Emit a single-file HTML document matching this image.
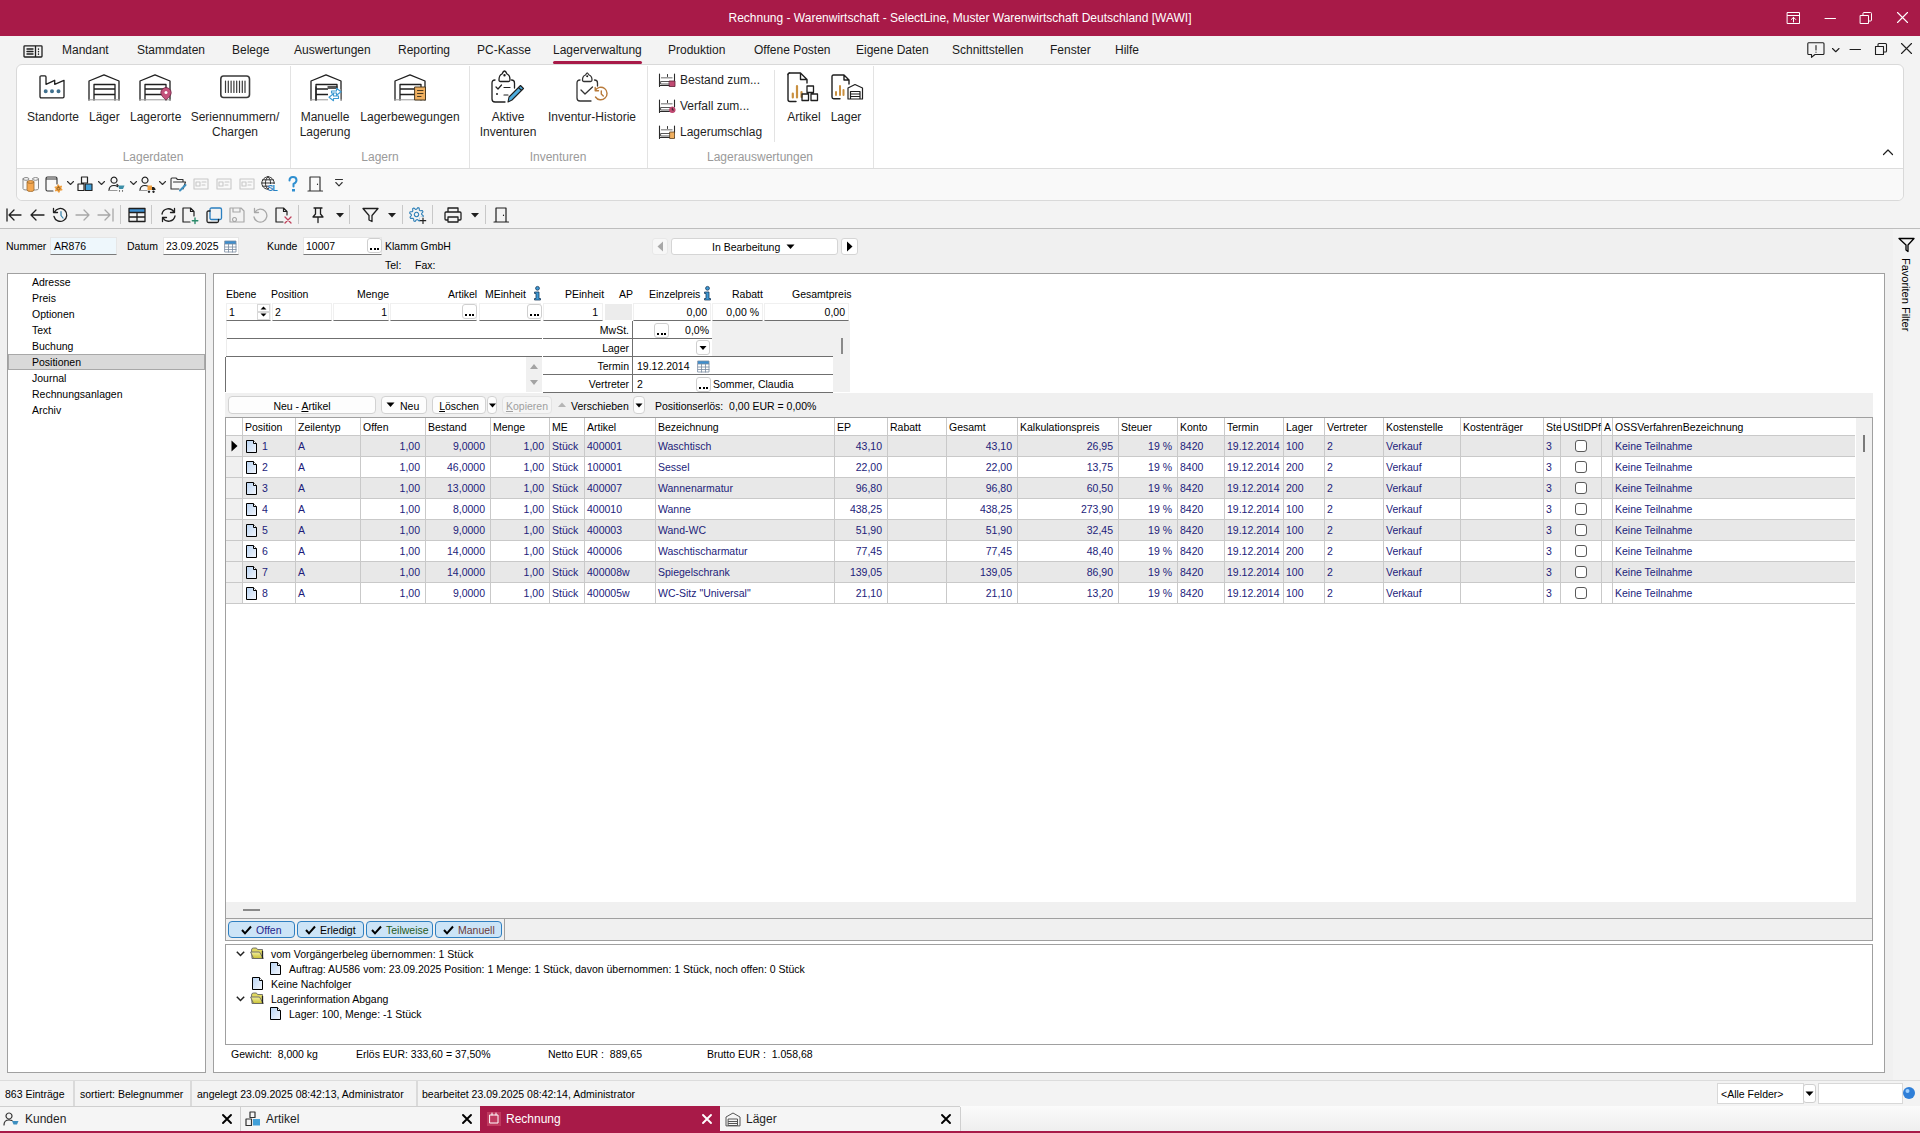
<!DOCTYPE html><html><head><meta charset="utf-8"><style>
*{margin:0;padding:0;box-sizing:border-box}
html,body{width:1920px;height:1133px;overflow:hidden;background:#f0f0f0;font-family:"Liberation Sans",sans-serif;font-size:10.5px;color:#000}
.a{position:absolute}
.t{position:absolute;white-space:nowrap;line-height:1}
svg{position:absolute;overflow:visible}
</style></head><body><div class="a" style="left:0px;top:0px;width:1920px;height:36px;background:#a81a48"></div>
<div class="t" style="left:660px;width:600px;text-align:center;top:11.84px;font-size:12px;color:#fff">Rechnung - Warenwirtschaft - SelectLine, Muster Warenwirtschaft Deutschland [WAWI]</div>
<div class="a" style="left:0px;top:36px;width:1920px;height:192px;background:#f3f3f3"></div>
<div class="t" style="left:62px;top:43.84px;font-size:12px;color:#1a1a1a">Mandant</div>
<div class="t" style="left:137px;top:43.84px;font-size:12px;color:#1a1a1a">Stammdaten</div>
<div class="t" style="left:232px;top:43.84px;font-size:12px;color:#1a1a1a">Belege</div>
<div class="t" style="left:294px;top:43.84px;font-size:12px;color:#1a1a1a">Auswertungen</div>
<div class="t" style="left:398px;top:43.84px;font-size:12px;color:#1a1a1a">Reporting</div>
<div class="t" style="left:477px;top:43.84px;font-size:12px;color:#1a1a1a">PC-Kasse</div>
<div class="t" style="left:553px;top:43.84px;font-size:12px;color:#1a1a1a">Lagerverwaltung</div>
<div class="t" style="left:668px;top:43.84px;font-size:12px;color:#1a1a1a">Produktion</div>
<div class="t" style="left:754px;top:43.84px;font-size:12px;color:#1a1a1a">Offene Posten</div>
<div class="t" style="left:856px;top:43.84px;font-size:12px;color:#1a1a1a">Eigene Daten</div>
<div class="t" style="left:952px;top:43.84px;font-size:12px;color:#1a1a1a">Schnittstellen</div>
<div class="t" style="left:1050px;top:43.84px;font-size:12px;color:#1a1a1a">Fenster</div>
<div class="t" style="left:1115px;top:43.84px;font-size:12px;color:#1a1a1a">Hilfe</div>
<div class="a" style="left:553px;top:61px;width:89px;height:3px;background:#a81a48;border-radius:2px"></div>
<div class="a" style="left:16px;top:64px;width:1888px;height:137px;background:#fff;border:1px solid #d9d9d9;border-radius:6px;"></div>
<div class="a" style="left:17px;top:168px;width:1886px;height:32px;background:#f9f9f9;border-top:1px solid #dcdcdc;border-radius:0 0 6px 6px"></div>
<div class="t" style="left:27px;top:110.84px;font-size:12px;color:#1f1f1f">Standorte</div>
<div class="t" style="left:89px;top:110.84px;font-size:12px;color:#1f1f1f">Läger</div>
<div class="t" style="left:130px;top:110.84px;font-size:12px;color:#1f1f1f">Lagerorte</div>
<div class="t" style="left:-65px;width:600px;text-align:center;top:110.84px;font-size:12px;color:#1f1f1f">Seriennummern/</div>
<div class="t" style="left:-65px;width:600px;text-align:center;top:125.84px;font-size:12px;color:#1f1f1f">Chargen</div>
<div class="t" style="left:25px;width:600px;text-align:center;top:110.84px;font-size:12px;color:#1f1f1f">Manuelle</div>
<div class="t" style="left:25px;width:600px;text-align:center;top:125.84px;font-size:12px;color:#1f1f1f">Lagerung</div>
<div class="t" style="left:110px;width:600px;text-align:center;top:110.84px;font-size:12px;color:#1f1f1f">Lagerbewegungen</div>
<div class="t" style="left:208px;width:600px;text-align:center;top:110.84px;font-size:12px;color:#1f1f1f">Aktive</div>
<div class="t" style="left:208px;width:600px;text-align:center;top:125.84px;font-size:12px;color:#1f1f1f">Inventuren</div>
<div class="t" style="left:292px;width:600px;text-align:center;top:110.84px;font-size:12px;color:#1f1f1f">Inventur-Historie</div>
<div class="t" style="left:680px;top:73.84px;font-size:12px;color:#1f1f1f">Bestand zum...</div>
<div class="t" style="left:680px;top:99.84px;font-size:12px;color:#1f1f1f">Verfall zum...</div>
<div class="t" style="left:680px;top:125.84px;font-size:12px;color:#1f1f1f">Lagerumschlag</div>
<div class="t" style="left:504px;width:600px;text-align:center;top:110.84px;font-size:12px;color:#1f1f1f">Artikel</div>
<div class="t" style="left:546px;width:600px;text-align:center;top:110.84px;font-size:12px;color:#1f1f1f">Lager</div>
<div class="t" style="left:-147px;width:600px;text-align:center;top:150.84px;font-size:12px;color:#9a9a9a">Lagerdaten</div>
<div class="t" style="left:80px;width:600px;text-align:center;top:150.84px;font-size:12px;color:#9a9a9a">Lagern</div>
<div class="t" style="left:258px;width:600px;text-align:center;top:150.84px;font-size:12px;color:#9a9a9a">Inventuren</div>
<div class="t" style="left:460px;width:600px;text-align:center;top:150.84px;font-size:12px;color:#9a9a9a">Lagerauswertungen</div>
<div class="a" style="left:290px;top:66px;width:1px;height:102px;background:#e3e3e3"></div>
<div class="a" style="left:469px;top:66px;width:1px;height:102px;background:#e3e3e3"></div>
<div class="a" style="left:647px;top:66px;width:1px;height:102px;background:#e3e3e3"></div>
<div class="a" style="left:873px;top:66px;width:1px;height:102px;background:#e3e3e3"></div>
<div class="a" style="left:774px;top:70px;width:1px;height:72px;background:#e3e3e3"></div>
<div class="a" style="left:0px;top:228px;width:1920px;height:1px;background:#bdbdbd"></div>
<svg width="0" height="0" style="position:absolute"><defs><linearGradient id="dg" x1="0" y1="0" x2="1" y2="1"><stop offset="0" stop-color="#b8d4f4"/><stop offset="1" stop-color="#f4f6fb"/></linearGradient><linearGradient id="fg" x1="0" y1="0" x2="0" y2="1"><stop offset="0" stop-color="#f4f0a0"/><stop offset="1" stop-color="#c8c030"/></linearGradient></defs></svg>
<div class="t" style="left:6px;top:241.11px;font-size:10.5px;">Nummer</div>
<div class="a" style="left:50px;top:237px;width:67px;height:18px;background:#eef7fc;border:1px solid #e6e6e6;border-bottom:1px solid #7a7a7a"></div>
<div class="t" style="left:54px;top:241.11px;font-size:10.5px;">AR876</div>
<div class="t" style="left:127px;top:241.11px;font-size:10.5px;">Datum</div>
<div class="a" style="left:163px;top:237px;width:76px;height:18px;background:#fff;border:1px solid #e6e6e6;border-bottom:1px solid #7a7a7a"></div>
<div class="t" style="left:166px;top:241.11px;font-size:10.5px;">23.09.2025</div>
<div class="t" style="left:267px;top:241.11px;font-size:10.5px;">Kunde</div>
<div class="a" style="left:303px;top:237px;width:79px;height:18px;background:#fff;border:1px solid #e6e6e6;border-bottom:1px solid #7a7a7a"></div>
<div class="t" style="left:306px;top:241.11px;font-size:10.5px;">10007</div>
<div class="a" style="left:367px;top:238px;width:15px;height:15px;background:#fff;border:1px solid #cfcfcf;border-radius:3px"></div>
<div class="a" style="left:370.0px;top:248px;width:2px;height:2px;background:#000"></div>
<div class="a" style="left:373.5px;top:248px;width:2px;height:2px;background:#000"></div>
<div class="a" style="left:377.0px;top:248px;width:2px;height:2px;background:#000"></div>
<div class="t" style="left:385px;top:241.11px;font-size:10.5px;">Klamm GmbH</div>
<div class="t" style="left:385px;top:260.11px;font-size:10.5px;">Tel:</div>
<div class="t" style="left:415px;top:260.11px;font-size:10.5px;">Fax:</div>
<div class="a" style="left:652px;top:238px;width:16px;height:17px;background:#f7f7f7;border:1px solid #e8e8e8;border-radius:3px"></div>
<div class="a" style="left:671px;top:238px;width:167px;height:17px;background:#fff;border:1px solid #d5d5d5;border-radius:3px"></div>
<div class="t" style="left:712px;top:242.11px;font-size:10.5px;">In Bearbeitung</div>
<div class="a" style="left:841px;top:238px;width:17px;height:17px;background:#fff;border:1px solid #d5d5d5;border-radius:3px"></div>
<div class="a" style="left:7px;top:273px;width:199px;height:800px;background:#fff;border:1px solid #a0a0a0"></div>
<div class="a" style="left:8px;top:354px;width:197px;height:16px;background:#d9d9d9;border:1px solid #a8a8a8"></div>
<div class="t" style="left:32px;top:277.11px;font-size:10.5px;">Adresse</div>
<div class="t" style="left:32px;top:293.11px;font-size:10.5px;">Preis</div>
<div class="t" style="left:32px;top:309.11px;font-size:10.5px;">Optionen</div>
<div class="t" style="left:32px;top:325.11px;font-size:10.5px;">Text</div>
<div class="t" style="left:32px;top:341.11px;font-size:10.5px;">Buchung</div>
<div class="t" style="left:32px;top:357.11px;font-size:10.5px;">Positionen</div>
<div class="t" style="left:32px;top:373.11px;font-size:10.5px;">Journal</div>
<div class="t" style="left:32px;top:389.11px;font-size:10.5px;">Rechnungsanlagen</div>
<div class="t" style="left:32px;top:405.11px;font-size:10.5px;">Archiv</div>
<div class="a" style="left:213px;top:273px;width:1672px;height:800px;background:#fff;border:1px solid #a0a0a0"></div>
<div class="a" style="left:1893px;top:229px;width:27px;height:851px;background:#f3f3f3"></div>
<div class="t" style="left:226px;top:289.11px;font-size:10.5px;">Ebene</div>
<div class="t" style="left:271px;top:289.11px;font-size:10.5px;">Position</div>
<div class="t" style="left:357px;top:289.11px;font-size:10.5px;">Menge</div>
<div class="t" style="left:448px;top:289.11px;font-size:10.5px;">Artikel</div>
<div class="t" style="left:485px;top:289.11px;font-size:10.5px;">MEinheit</div>
<div class="t" style="left:565px;top:289.11px;font-size:10.5px;">PEinheit</div>
<div class="t" style="left:619px;top:289.11px;font-size:10.5px;">AP</div>
<div class="t" style="left:649px;top:289.11px;font-size:10.5px;">Einzelpreis</div>
<div class="t" style="left:732px;top:289.11px;font-size:10.5px;">Rabatt</div>
<div class="t" style="left:792px;top:289.11px;font-size:10.5px;">Gesamtpreis</div>
<svg style="left:533px;top:286px;" width="9" height="15" viewBox="0 0 9 15"><circle cx="4.5" cy="2.3" r="1.9" fill="#3d9ad6" stroke="#1a3a5a" stroke-width="0.8"/><path d="M1.5 6 H6 V12.5 H7.5 V14 H1.5 V12.5 H3 V7.5 H1.5Z" fill="#3d9ad6" stroke="#1a3a5a" stroke-width="0.8"/></svg>
<svg style="left:703px;top:286px;" width="9" height="15" viewBox="0 0 9 15"><circle cx="4.5" cy="2.3" r="1.9" fill="#3d9ad6" stroke="#1a3a5a" stroke-width="0.8"/><path d="M1.5 6 H6 V12.5 H7.5 V14 H1.5 V12.5 H3 V7.5 H1.5Z" fill="#3d9ad6" stroke="#1a3a5a" stroke-width="0.8"/></svg>
<div class="a" style="left:226px;top:303px;width:45px;height:18px;background:#fff;border:1px solid #f0f0f0;border-bottom:1px solid #6f6f6f"></div>
<div class="a" style="left:272px;top:303px;width:60px;height:18px;background:#fff;border:1px solid #f0f0f0;border-bottom:1px solid #6f6f6f"></div>
<div class="a" style="left:333px;top:303px;width:56px;height:18px;background:#fff;border:1px solid #f0f0f0;border-bottom:1px solid #6f6f6f"></div>
<div class="a" style="left:390px;top:303px;width:87px;height:18px;background:#fff;border:1px solid #f0f0f0;border-bottom:1px solid #6f6f6f"></div>
<div class="a" style="left:479px;top:303px;width:62px;height:18px;background:#fff;border:1px solid #f0f0f0;border-bottom:1px solid #6f6f6f"></div>
<div class="a" style="left:543px;top:303px;width:60px;height:18px;background:#fff;border:1px solid #f0f0f0;border-bottom:1px solid #6f6f6f"></div>
<div class="a" style="left:633px;top:303px;width:78px;height:18px;background:#fff;border:1px solid #f0f0f0;border-bottom:1px solid #6f6f6f"></div>
<div class="a" style="left:712px;top:303px;width:51px;height:18px;background:#fff;border:1px solid #f0f0f0;border-bottom:1px solid #6f6f6f"></div>
<div class="a" style="left:764px;top:303px;width:85px;height:18px;background:#fff;border:1px solid #f0f0f0;border-bottom:1px solid #6f6f6f"></div>
<div class="a" style="left:605px;top:304px;width:27px;height:16px;background:#ececec"></div>
<div class="t" style="left:229px;top:307.11px;font-size:10.5px;">1</div>
<div class="t" style="left:275px;top:307.11px;font-size:10.5px;">2</div>
<div class="t" style="left:-13px;width:400px;text-align:right;top:307.11px;font-size:10.5px;">1</div>
<div class="t" style="left:198px;width:400px;text-align:right;top:307.11px;font-size:10.5px;">1</div>
<div class="t" style="left:307px;width:400px;text-align:right;top:307.11px;font-size:10.5px;">0,00</div>
<div class="t" style="left:359px;width:400px;text-align:right;top:307.11px;font-size:10.5px;">0,00 %</div>
<div class="t" style="left:445px;width:400px;text-align:right;top:307.11px;font-size:10.5px;">0,00</div>
<div class="a" style="left:257px;top:304px;width:13px;height:8px;background:#fff;border:1px solid #d8d8d8"></div>
<div class="a" style="left:257px;top:312px;width:13px;height:8px;background:#fff;border:1px solid #d8d8d8"></div>
<svg style="left:257px;top:304px;" width="13" height="16" viewBox="0 0 13 16"><path d="M3.5 5.5 L6.5 2.5 L9.5 5.5Z M3.5 9.5 L6.5 12.5 L9.5 9.5Z" fill="#000"/></svg>
<div class="a" style="left:462px;top:304px;width:15px;height:15px;background:#fff;border:1px solid #cfcfcf;border-radius:3px"></div>
<div class="a" style="left:465.0px;top:314px;width:2px;height:2px;background:#000"></div>
<div class="a" style="left:468.5px;top:314px;width:2px;height:2px;background:#000"></div>
<div class="a" style="left:472.0px;top:314px;width:2px;height:2px;background:#000"></div>
<div class="a" style="left:527px;top:304px;width:15px;height:15px;background:#fff;border:1px solid #cfcfcf;border-radius:3px"></div>
<div class="a" style="left:530.0px;top:314px;width:2px;height:2px;background:#000"></div>
<div class="a" style="left:533.5px;top:314px;width:2px;height:2px;background:#000"></div>
<div class="a" style="left:537.0px;top:314px;width:2px;height:2px;background:#000"></div>
<div class="a" style="left:226px;top:338px;width:316px;height:1px;background:#6f6f6f"></div>
<div class="a" style="left:226px;top:356px;width:316px;height:1px;background:#6f6f6f"></div>
<div class="a" style="left:526px;top:357px;width:16px;height:35px;background:#f0f0f0"></div>
<div class="a" style="left:225px;top:357px;width:1px;height:35px;background:#6f6f6f"></div>
<div class="a" style="left:226px;top:321px;width:1px;height:35px;background:#ececec"></div>
<svg style="left:527px;top:360px;" width="14" height="28" viewBox="0 0 14 28"><path d="M3 9 L7 4 L11 9Z M3 20 L7 25 L11 20Z" fill="#a3a3a3"/></svg>
<div class="a" style="left:543px;top:338px;width:290px;height:1px;background:#6f6f6f"></div>
<div class="a" style="left:543px;top:356px;width:290px;height:1px;background:#6f6f6f"></div>
<div class="a" style="left:543px;top:374px;width:290px;height:1px;background:#6f6f6f"></div>
<div class="a" style="left:543px;top:392px;width:290px;height:1px;background:#6f6f6f"></div>
<div class="a" style="left:632px;top:321px;width:1px;height:71px;background:#6f6f6f"></div>
<div class="a" style="left:712px;top:321px;width:121px;height:35px;background:#f0f0f0"></div>
<div class="a" style="left:833px;top:321px;width:17px;height:71px;background:#f0f0f0"></div>
<div class="a" style="left:841px;top:338px;width:2px;height:16px;background:#8a8a8a"></div>
<div class="t" style="left:229px;width:400px;text-align:right;top:325.11px;font-size:10.5px;">MwSt.</div>
<div class="t" style="left:229px;width:400px;text-align:right;top:343.11px;font-size:10.5px;">Lager</div>
<div class="t" style="left:229px;width:400px;text-align:right;top:361.11px;font-size:10.5px;">Termin</div>
<div class="t" style="left:229px;width:400px;text-align:right;top:379.11px;font-size:10.5px;">Vertreter</div>
<div class="a" style="left:654px;top:323px;width:15px;height:15px;background:#fff;border:1px solid #cfcfcf;border-radius:3px"></div>
<div class="a" style="left:657.0px;top:333px;width:2px;height:2px;background:#000"></div>
<div class="a" style="left:660.5px;top:333px;width:2px;height:2px;background:#000"></div>
<div class="a" style="left:664.0px;top:333px;width:2px;height:2px;background:#000"></div>
<div class="t" style="left:309px;width:400px;text-align:right;top:325.11px;font-size:10.5px;">0,0%</div>
<div class="a" style="left:696px;top:340px;width:14px;height:15px;background:#fff;border:1px solid #cfcfcf;border-radius:3px"></div>
<svg style="left:697px;top:341px;" width="12" height="13" viewBox="0 0 12 13"><path d="M2.5 5 L9.5 5 L6 9Z" fill="#000"/></svg>
<div class="t" style="left:637px;top:361.11px;font-size:10.5px;">19.12.2014</div>
<div class="t" style="left:637px;top:379.11px;font-size:10.5px;">2</div>
<div class="a" style="left:696px;top:377px;width:15px;height:15px;background:#fff;border:1px solid #cfcfcf;border-radius:3px"></div>
<div class="a" style="left:699.0px;top:387px;width:2px;height:2px;background:#000"></div>
<div class="a" style="left:702.5px;top:387px;width:2px;height:2px;background:#000"></div>
<div class="a" style="left:706.0px;top:387px;width:2px;height:2px;background:#000"></div>
<div class="t" style="left:713px;top:379.11px;font-size:10.5px;">Sommer, Claudia</div>
<div class="a" style="left:225px;top:393px;width:1648px;height:24px;background:#f0f0f0"></div>
<div class="a" style="left:228px;top:396px;width:148px;height:18px;background:#fdfdfd;border:1px solid #d2d2d2;border-radius:4px"></div>
<div class="t" style="left:2px;width:600px;text-align:center;top:400.61px;font-size:10.5px;">Neu - <u>A</u>rtikel</div>
<div class="a" style="left:381px;top:396px;width:46px;height:18px;background:#fdfdfd;border:1px solid #d2d2d2;border-radius:4px"></div>
<svg style="left:386px;top:401px;" width="10" height="8" viewBox="0 0 10 8"><path d="M0.5 1.5 L8.5 1.5 L4.5 6Z" fill="#000"/></svg>
<div class="t" style="left:400px;top:400.61px;font-size:10.5px;">Neu</div>
<div class="a" style="left:432px;top:396px;width:54px;height:18px;background:#fdfdfd;border:1px solid #d2d2d2;border-radius:4px"></div>
<div class="t" style="left:159px;width:600px;text-align:center;top:400.61px;font-size:10.5px;"><u>L</u>öschen</div>
<div class="a" style="left:487px;top:396px;width:10px;height:18px;background:#fdfdfd;border:1px solid #d2d2d2;border-radius:4px"></div>
<svg style="left:488px;top:403px;" width="9" height="6" viewBox="0 0 9 6"><path d="M1 0.5 L8 0.5 L4.5 4.5Z" fill="#000"/></svg>
<div class="a" style="left:502px;top:396px;width:50px;height:18px;background:#f5f5f5;border:1px solid #e3e3e3;border-radius:4px"></div>
<div class="t" style="left:227px;width:600px;text-align:center;top:400.61px;font-size:10.5px;color:#a0a0a0"><u>K</u>opieren</div>
<svg style="left:557px;top:401px;" width="10" height="8" viewBox="0 0 10 8"><path d="M1 6 L5 1.5 L9 6Z" fill="#b5b5b5"/></svg>
<div class="t" style="left:571px;top:400.61px;font-size:10.5px;">Verschieben</div>
<div class="a" style="left:633px;top:396px;width:12px;height:18px;background:#fdfdfd;border:1px solid #d2d2d2;border-radius:4px"></div>
<svg style="left:634px;top:403px;" width="10" height="6" viewBox="0 0 10 6"><path d="M1.5 0.5 L8.5 0.5 L5 4.5Z" fill="#000"/></svg>
<div class="t" style="left:655px;top:400.61px;font-size:10.5px;">Positionserlös:&nbsp; 0,00 EUR = 0,00%</div>
<div class="a" style="left:225px;top:417px;width:1648px;height:502px;background:#fff;border:1px solid #a0a0a0"></div>
<div class="a" style="left:242px;top:436px;width:1613px;height:20px;background:#e8e8e8"></div>
<div class="a" style="left:226px;top:436px;width:16px;height:20px;background:#f0f0f0"></div>
<div class="a" style="left:226px;top:456px;width:1629px;height:1px;background:#c9c9c9"></div>
<div class="a" style="left:226px;top:457px;width:16px;height:20px;background:#f0f0f0"></div>
<div class="a" style="left:226px;top:477px;width:1629px;height:1px;background:#c9c9c9"></div>
<div class="a" style="left:242px;top:478px;width:1613px;height:20px;background:#e8e8e8"></div>
<div class="a" style="left:226px;top:478px;width:16px;height:20px;background:#f0f0f0"></div>
<div class="a" style="left:226px;top:498px;width:1629px;height:1px;background:#c9c9c9"></div>
<div class="a" style="left:226px;top:499px;width:16px;height:20px;background:#f0f0f0"></div>
<div class="a" style="left:226px;top:519px;width:1629px;height:1px;background:#c9c9c9"></div>
<div class="a" style="left:242px;top:520px;width:1613px;height:20px;background:#e8e8e8"></div>
<div class="a" style="left:226px;top:520px;width:16px;height:20px;background:#f0f0f0"></div>
<div class="a" style="left:226px;top:540px;width:1629px;height:1px;background:#c9c9c9"></div>
<div class="a" style="left:226px;top:541px;width:16px;height:20px;background:#f0f0f0"></div>
<div class="a" style="left:226px;top:561px;width:1629px;height:1px;background:#c9c9c9"></div>
<div class="a" style="left:242px;top:562px;width:1613px;height:20px;background:#e8e8e8"></div>
<div class="a" style="left:226px;top:562px;width:16px;height:20px;background:#f0f0f0"></div>
<div class="a" style="left:226px;top:582px;width:1629px;height:1px;background:#c9c9c9"></div>
<div class="a" style="left:226px;top:583px;width:16px;height:20px;background:#f0f0f0"></div>
<div class="a" style="left:226px;top:603px;width:1629px;height:1px;background:#c9c9c9"></div>
<div class="a" style="left:226px;top:435px;width:1629px;height:1px;background:#c9c9c9"></div>
<div class="a" style="left:242px;top:418px;width:1px;height:186px;background:#c9c9c9"></div>
<div class="a" style="left:295px;top:418px;width:1px;height:186px;background:#c9c9c9"></div>
<div class="a" style="left:360px;top:418px;width:1px;height:186px;background:#c9c9c9"></div>
<div class="a" style="left:425px;top:418px;width:1px;height:186px;background:#c9c9c9"></div>
<div class="a" style="left:490px;top:418px;width:1px;height:186px;background:#c9c9c9"></div>
<div class="a" style="left:549px;top:418px;width:1px;height:186px;background:#c9c9c9"></div>
<div class="a" style="left:584px;top:418px;width:1px;height:186px;background:#c9c9c9"></div>
<div class="a" style="left:655px;top:418px;width:1px;height:186px;background:#c9c9c9"></div>
<div class="a" style="left:834px;top:418px;width:1px;height:186px;background:#c9c9c9"></div>
<div class="a" style="left:887px;top:418px;width:1px;height:186px;background:#c9c9c9"></div>
<div class="a" style="left:946px;top:418px;width:1px;height:186px;background:#c9c9c9"></div>
<div class="a" style="left:1017px;top:418px;width:1px;height:186px;background:#c9c9c9"></div>
<div class="a" style="left:1118px;top:418px;width:1px;height:186px;background:#c9c9c9"></div>
<div class="a" style="left:1177px;top:418px;width:1px;height:186px;background:#c9c9c9"></div>
<div class="a" style="left:1224px;top:418px;width:1px;height:186px;background:#c9c9c9"></div>
<div class="a" style="left:1283px;top:418px;width:1px;height:186px;background:#c9c9c9"></div>
<div class="a" style="left:1324px;top:418px;width:1px;height:186px;background:#c9c9c9"></div>
<div class="a" style="left:1383px;top:418px;width:1px;height:186px;background:#c9c9c9"></div>
<div class="a" style="left:1460px;top:418px;width:1px;height:186px;background:#c9c9c9"></div>
<div class="a" style="left:1543px;top:418px;width:1px;height:186px;background:#c9c9c9"></div>
<div class="a" style="left:1560px;top:418px;width:1px;height:186px;background:#c9c9c9"></div>
<div class="a" style="left:1601px;top:418px;width:1px;height:186px;background:#c9c9c9"></div>
<div class="a" style="left:1612px;top:418px;width:1px;height:186px;background:#c9c9c9"></div>
<div class="t" style="left:245px;top:422.11px;font-size:10.5px;">Position</div>
<div class="t" style="left:298px;top:422.11px;font-size:10.5px;">Zeilentyp</div>
<div class="t" style="left:363px;top:422.11px;font-size:10.5px;">Offen</div>
<div class="t" style="left:428px;top:422.11px;font-size:10.5px;">Bestand</div>
<div class="t" style="left:493px;top:422.11px;font-size:10.5px;">Menge</div>
<div class="t" style="left:552px;top:422.11px;font-size:10.5px;">ME</div>
<div class="t" style="left:587px;top:422.11px;font-size:10.5px;">Artikel</div>
<div class="t" style="left:658px;top:422.11px;font-size:10.5px;">Bezeichnung</div>
<div class="t" style="left:837px;top:422.11px;font-size:10.5px;">EP</div>
<div class="t" style="left:890px;top:422.11px;font-size:10.5px;">Rabatt</div>
<div class="t" style="left:949px;top:422.11px;font-size:10.5px;">Gesamt</div>
<div class="t" style="left:1020px;top:422.11px;font-size:10.5px;">Kalkulationspreis</div>
<div class="t" style="left:1121px;top:422.11px;font-size:10.5px;">Steuer</div>
<div class="t" style="left:1180px;top:422.11px;font-size:10.5px;">Konto</div>
<div class="t" style="left:1227px;top:422.11px;font-size:10.5px;">Termin</div>
<div class="t" style="left:1286px;top:422.11px;font-size:10.5px;">Lager</div>
<div class="t" style="left:1327px;top:422.11px;font-size:10.5px;">Vertreter</div>
<div class="t" style="left:1386px;top:422.11px;font-size:10.5px;">Kostenstelle</div>
<div class="t" style="left:1463px;top:422.11px;font-size:10.5px;">Kostenträger</div>
<div class="t" style="left:1546px;top:422.11px;font-size:10.5px;">Ste</div>
<div class="t" style="left:1563px;top:422.11px;font-size:10.5px;">UStIDPf</div>
<div class="t" style="left:1604px;top:422.11px;font-size:10.5px;">A</div>
<div class="t" style="left:1615px;top:422.11px;font-size:10.5px;">OSSVerfahrenBezeichnung</div>
<div class="t" style="left:262px;top:440.61px;font-size:10.5px;color:#1c1c7a">1</div>
<div class="t" style="left:298px;top:440.61px;font-size:10.5px;color:#1c1c7a">A</div>
<div class="t" style="left:20px;width:400px;text-align:right;top:440.61px;font-size:10.5px;color:#1c1c7a">1,00</div>
<div class="t" style="left:85px;width:400px;text-align:right;top:440.61px;font-size:10.5px;color:#1c1c7a">9,0000</div>
<div class="t" style="left:144px;width:400px;text-align:right;top:440.61px;font-size:10.5px;color:#1c1c7a">1,00</div>
<div class="t" style="left:552px;top:440.61px;font-size:10.5px;color:#1c1c7a">Stück</div>
<div class="t" style="left:587px;top:440.61px;font-size:10.5px;color:#1c1c7a">400001</div>
<div class="t" style="left:658px;top:440.61px;font-size:10.5px;color:#1c1c7a">Waschtisch</div>
<div class="t" style="left:482px;width:400px;text-align:right;top:440.61px;font-size:10.5px;color:#1c1c7a">43,10</div>
<div class="t" style="left:612px;width:400px;text-align:right;top:440.61px;font-size:10.5px;color:#1c1c7a">43,10</div>
<div class="t" style="left:713px;width:400px;text-align:right;top:440.61px;font-size:10.5px;color:#1c1c7a">26,95</div>
<div class="t" style="left:772px;width:400px;text-align:right;top:440.61px;font-size:10.5px;color:#1c1c7a">19 %</div>
<div class="t" style="left:1180px;top:440.61px;font-size:10.5px;color:#1c1c7a">8420</div>
<div class="t" style="left:1227px;top:440.61px;font-size:10.5px;color:#1c1c7a">19.12.2014</div>
<div class="t" style="left:1286px;top:440.61px;font-size:10.5px;color:#1c1c7a">100</div>
<div class="t" style="left:1327px;top:440.61px;font-size:10.5px;color:#1c1c7a">2</div>
<div class="t" style="left:1386px;top:440.61px;font-size:10.5px;color:#1c1c7a">Verkauf</div>
<div class="t" style="left:1546px;top:440.61px;font-size:10.5px;color:#1c1c7a">3</div>
<div class="t" style="left:1615px;top:440.61px;font-size:10.5px;color:#1c1c7a">Keine Teilnahme</div>
<svg style="left:246px;top:440px;" width="12" height="14" viewBox="0 0 12 14"><path d="M0.5 0.5 H7.5 L10.5 3.5 V12.5 H0.5Z" fill="url(#dg)" stroke="#000"/><path d="M7.5 0.5 V3.5 H10.5" fill="#fff" stroke="#000"/></svg>
<div class="a" style="left:1575px;top:440px;width:12px;height:12px;background:#fff;border:1px solid #5a5a5a;border-radius:3px"></div>
<div class="t" style="left:262px;top:461.61px;font-size:10.5px;color:#1c1c7a">2</div>
<div class="t" style="left:298px;top:461.61px;font-size:10.5px;color:#1c1c7a">A</div>
<div class="t" style="left:20px;width:400px;text-align:right;top:461.61px;font-size:10.5px;color:#1c1c7a">1,00</div>
<div class="t" style="left:85px;width:400px;text-align:right;top:461.61px;font-size:10.5px;color:#1c1c7a">46,0000</div>
<div class="t" style="left:144px;width:400px;text-align:right;top:461.61px;font-size:10.5px;color:#1c1c7a">1,00</div>
<div class="t" style="left:552px;top:461.61px;font-size:10.5px;color:#1c1c7a">Stück</div>
<div class="t" style="left:587px;top:461.61px;font-size:10.5px;color:#1c1c7a">100001</div>
<div class="t" style="left:658px;top:461.61px;font-size:10.5px;color:#1c1c7a">Sessel</div>
<div class="t" style="left:482px;width:400px;text-align:right;top:461.61px;font-size:10.5px;color:#1c1c7a">22,00</div>
<div class="t" style="left:612px;width:400px;text-align:right;top:461.61px;font-size:10.5px;color:#1c1c7a">22,00</div>
<div class="t" style="left:713px;width:400px;text-align:right;top:461.61px;font-size:10.5px;color:#1c1c7a">13,75</div>
<div class="t" style="left:772px;width:400px;text-align:right;top:461.61px;font-size:10.5px;color:#1c1c7a">19 %</div>
<div class="t" style="left:1180px;top:461.61px;font-size:10.5px;color:#1c1c7a">8400</div>
<div class="t" style="left:1227px;top:461.61px;font-size:10.5px;color:#1c1c7a">19.12.2014</div>
<div class="t" style="left:1286px;top:461.61px;font-size:10.5px;color:#1c1c7a">200</div>
<div class="t" style="left:1327px;top:461.61px;font-size:10.5px;color:#1c1c7a">2</div>
<div class="t" style="left:1386px;top:461.61px;font-size:10.5px;color:#1c1c7a">Verkauf</div>
<div class="t" style="left:1546px;top:461.61px;font-size:10.5px;color:#1c1c7a">3</div>
<div class="t" style="left:1615px;top:461.61px;font-size:10.5px;color:#1c1c7a">Keine Teilnahme</div>
<svg style="left:246px;top:461px;" width="12" height="14" viewBox="0 0 12 14"><path d="M0.5 0.5 H7.5 L10.5 3.5 V12.5 H0.5Z" fill="url(#dg)" stroke="#000"/><path d="M7.5 0.5 V3.5 H10.5" fill="#fff" stroke="#000"/></svg>
<div class="a" style="left:1575px;top:461px;width:12px;height:12px;background:#fff;border:1px solid #5a5a5a;border-radius:3px"></div>
<div class="t" style="left:262px;top:482.61px;font-size:10.5px;color:#1c1c7a">3</div>
<div class="t" style="left:298px;top:482.61px;font-size:10.5px;color:#1c1c7a">A</div>
<div class="t" style="left:20px;width:400px;text-align:right;top:482.61px;font-size:10.5px;color:#1c1c7a">1,00</div>
<div class="t" style="left:85px;width:400px;text-align:right;top:482.61px;font-size:10.5px;color:#1c1c7a">13,0000</div>
<div class="t" style="left:144px;width:400px;text-align:right;top:482.61px;font-size:10.5px;color:#1c1c7a">1,00</div>
<div class="t" style="left:552px;top:482.61px;font-size:10.5px;color:#1c1c7a">Stück</div>
<div class="t" style="left:587px;top:482.61px;font-size:10.5px;color:#1c1c7a">400007</div>
<div class="t" style="left:658px;top:482.61px;font-size:10.5px;color:#1c1c7a">Wannenarmatur</div>
<div class="t" style="left:482px;width:400px;text-align:right;top:482.61px;font-size:10.5px;color:#1c1c7a">96,80</div>
<div class="t" style="left:612px;width:400px;text-align:right;top:482.61px;font-size:10.5px;color:#1c1c7a">96,80</div>
<div class="t" style="left:713px;width:400px;text-align:right;top:482.61px;font-size:10.5px;color:#1c1c7a">60,50</div>
<div class="t" style="left:772px;width:400px;text-align:right;top:482.61px;font-size:10.5px;color:#1c1c7a">19 %</div>
<div class="t" style="left:1180px;top:482.61px;font-size:10.5px;color:#1c1c7a">8420</div>
<div class="t" style="left:1227px;top:482.61px;font-size:10.5px;color:#1c1c7a">19.12.2014</div>
<div class="t" style="left:1286px;top:482.61px;font-size:10.5px;color:#1c1c7a">200</div>
<div class="t" style="left:1327px;top:482.61px;font-size:10.5px;color:#1c1c7a">2</div>
<div class="t" style="left:1386px;top:482.61px;font-size:10.5px;color:#1c1c7a">Verkauf</div>
<div class="t" style="left:1546px;top:482.61px;font-size:10.5px;color:#1c1c7a">3</div>
<div class="t" style="left:1615px;top:482.61px;font-size:10.5px;color:#1c1c7a">Keine Teilnahme</div>
<svg style="left:246px;top:482px;" width="12" height="14" viewBox="0 0 12 14"><path d="M0.5 0.5 H7.5 L10.5 3.5 V12.5 H0.5Z" fill="url(#dg)" stroke="#000"/><path d="M7.5 0.5 V3.5 H10.5" fill="#fff" stroke="#000"/></svg>
<div class="a" style="left:1575px;top:482px;width:12px;height:12px;background:#fff;border:1px solid #5a5a5a;border-radius:3px"></div>
<div class="t" style="left:262px;top:503.61px;font-size:10.5px;color:#1c1c7a">4</div>
<div class="t" style="left:298px;top:503.61px;font-size:10.5px;color:#1c1c7a">A</div>
<div class="t" style="left:20px;width:400px;text-align:right;top:503.61px;font-size:10.5px;color:#1c1c7a">1,00</div>
<div class="t" style="left:85px;width:400px;text-align:right;top:503.61px;font-size:10.5px;color:#1c1c7a">8,0000</div>
<div class="t" style="left:144px;width:400px;text-align:right;top:503.61px;font-size:10.5px;color:#1c1c7a">1,00</div>
<div class="t" style="left:552px;top:503.61px;font-size:10.5px;color:#1c1c7a">Stück</div>
<div class="t" style="left:587px;top:503.61px;font-size:10.5px;color:#1c1c7a">400010</div>
<div class="t" style="left:658px;top:503.61px;font-size:10.5px;color:#1c1c7a">Wanne</div>
<div class="t" style="left:482px;width:400px;text-align:right;top:503.61px;font-size:10.5px;color:#1c1c7a">438,25</div>
<div class="t" style="left:612px;width:400px;text-align:right;top:503.61px;font-size:10.5px;color:#1c1c7a">438,25</div>
<div class="t" style="left:713px;width:400px;text-align:right;top:503.61px;font-size:10.5px;color:#1c1c7a">273,90</div>
<div class="t" style="left:772px;width:400px;text-align:right;top:503.61px;font-size:10.5px;color:#1c1c7a">19 %</div>
<div class="t" style="left:1180px;top:503.61px;font-size:10.5px;color:#1c1c7a">8420</div>
<div class="t" style="left:1227px;top:503.61px;font-size:10.5px;color:#1c1c7a">19.12.2014</div>
<div class="t" style="left:1286px;top:503.61px;font-size:10.5px;color:#1c1c7a">100</div>
<div class="t" style="left:1327px;top:503.61px;font-size:10.5px;color:#1c1c7a">2</div>
<div class="t" style="left:1386px;top:503.61px;font-size:10.5px;color:#1c1c7a">Verkauf</div>
<div class="t" style="left:1546px;top:503.61px;font-size:10.5px;color:#1c1c7a">3</div>
<div class="t" style="left:1615px;top:503.61px;font-size:10.5px;color:#1c1c7a">Keine Teilnahme</div>
<svg style="left:246px;top:503px;" width="12" height="14" viewBox="0 0 12 14"><path d="M0.5 0.5 H7.5 L10.5 3.5 V12.5 H0.5Z" fill="url(#dg)" stroke="#000"/><path d="M7.5 0.5 V3.5 H10.5" fill="#fff" stroke="#000"/></svg>
<div class="a" style="left:1575px;top:503px;width:12px;height:12px;background:#fff;border:1px solid #5a5a5a;border-radius:3px"></div>
<div class="t" style="left:262px;top:524.61px;font-size:10.5px;color:#1c1c7a">5</div>
<div class="t" style="left:298px;top:524.61px;font-size:10.5px;color:#1c1c7a">A</div>
<div class="t" style="left:20px;width:400px;text-align:right;top:524.61px;font-size:10.5px;color:#1c1c7a">1,00</div>
<div class="t" style="left:85px;width:400px;text-align:right;top:524.61px;font-size:10.5px;color:#1c1c7a">9,0000</div>
<div class="t" style="left:144px;width:400px;text-align:right;top:524.61px;font-size:10.5px;color:#1c1c7a">1,00</div>
<div class="t" style="left:552px;top:524.61px;font-size:10.5px;color:#1c1c7a">Stück</div>
<div class="t" style="left:587px;top:524.61px;font-size:10.5px;color:#1c1c7a">400003</div>
<div class="t" style="left:658px;top:524.61px;font-size:10.5px;color:#1c1c7a">Wand-WC</div>
<div class="t" style="left:482px;width:400px;text-align:right;top:524.61px;font-size:10.5px;color:#1c1c7a">51,90</div>
<div class="t" style="left:612px;width:400px;text-align:right;top:524.61px;font-size:10.5px;color:#1c1c7a">51,90</div>
<div class="t" style="left:713px;width:400px;text-align:right;top:524.61px;font-size:10.5px;color:#1c1c7a">32,45</div>
<div class="t" style="left:772px;width:400px;text-align:right;top:524.61px;font-size:10.5px;color:#1c1c7a">19 %</div>
<div class="t" style="left:1180px;top:524.61px;font-size:10.5px;color:#1c1c7a">8420</div>
<div class="t" style="left:1227px;top:524.61px;font-size:10.5px;color:#1c1c7a">19.12.2014</div>
<div class="t" style="left:1286px;top:524.61px;font-size:10.5px;color:#1c1c7a">100</div>
<div class="t" style="left:1327px;top:524.61px;font-size:10.5px;color:#1c1c7a">2</div>
<div class="t" style="left:1386px;top:524.61px;font-size:10.5px;color:#1c1c7a">Verkauf</div>
<div class="t" style="left:1546px;top:524.61px;font-size:10.5px;color:#1c1c7a">3</div>
<div class="t" style="left:1615px;top:524.61px;font-size:10.5px;color:#1c1c7a">Keine Teilnahme</div>
<svg style="left:246px;top:524px;" width="12" height="14" viewBox="0 0 12 14"><path d="M0.5 0.5 H7.5 L10.5 3.5 V12.5 H0.5Z" fill="url(#dg)" stroke="#000"/><path d="M7.5 0.5 V3.5 H10.5" fill="#fff" stroke="#000"/></svg>
<div class="a" style="left:1575px;top:524px;width:12px;height:12px;background:#fff;border:1px solid #5a5a5a;border-radius:3px"></div>
<div class="t" style="left:262px;top:545.61px;font-size:10.5px;color:#1c1c7a">6</div>
<div class="t" style="left:298px;top:545.61px;font-size:10.5px;color:#1c1c7a">A</div>
<div class="t" style="left:20px;width:400px;text-align:right;top:545.61px;font-size:10.5px;color:#1c1c7a">1,00</div>
<div class="t" style="left:85px;width:400px;text-align:right;top:545.61px;font-size:10.5px;color:#1c1c7a">14,0000</div>
<div class="t" style="left:144px;width:400px;text-align:right;top:545.61px;font-size:10.5px;color:#1c1c7a">1,00</div>
<div class="t" style="left:552px;top:545.61px;font-size:10.5px;color:#1c1c7a">Stück</div>
<div class="t" style="left:587px;top:545.61px;font-size:10.5px;color:#1c1c7a">400006</div>
<div class="t" style="left:658px;top:545.61px;font-size:10.5px;color:#1c1c7a">Waschtischarmatur</div>
<div class="t" style="left:482px;width:400px;text-align:right;top:545.61px;font-size:10.5px;color:#1c1c7a">77,45</div>
<div class="t" style="left:612px;width:400px;text-align:right;top:545.61px;font-size:10.5px;color:#1c1c7a">77,45</div>
<div class="t" style="left:713px;width:400px;text-align:right;top:545.61px;font-size:10.5px;color:#1c1c7a">48,40</div>
<div class="t" style="left:772px;width:400px;text-align:right;top:545.61px;font-size:10.5px;color:#1c1c7a">19 %</div>
<div class="t" style="left:1180px;top:545.61px;font-size:10.5px;color:#1c1c7a">8420</div>
<div class="t" style="left:1227px;top:545.61px;font-size:10.5px;color:#1c1c7a">19.12.2014</div>
<div class="t" style="left:1286px;top:545.61px;font-size:10.5px;color:#1c1c7a">200</div>
<div class="t" style="left:1327px;top:545.61px;font-size:10.5px;color:#1c1c7a">2</div>
<div class="t" style="left:1386px;top:545.61px;font-size:10.5px;color:#1c1c7a">Verkauf</div>
<div class="t" style="left:1546px;top:545.61px;font-size:10.5px;color:#1c1c7a">3</div>
<div class="t" style="left:1615px;top:545.61px;font-size:10.5px;color:#1c1c7a">Keine Teilnahme</div>
<svg style="left:246px;top:545px;" width="12" height="14" viewBox="0 0 12 14"><path d="M0.5 0.5 H7.5 L10.5 3.5 V12.5 H0.5Z" fill="url(#dg)" stroke="#000"/><path d="M7.5 0.5 V3.5 H10.5" fill="#fff" stroke="#000"/></svg>
<div class="a" style="left:1575px;top:545px;width:12px;height:12px;background:#fff;border:1px solid #5a5a5a;border-radius:3px"></div>
<div class="t" style="left:262px;top:566.61px;font-size:10.5px;color:#1c1c7a">7</div>
<div class="t" style="left:298px;top:566.61px;font-size:10.5px;color:#1c1c7a">A</div>
<div class="t" style="left:20px;width:400px;text-align:right;top:566.61px;font-size:10.5px;color:#1c1c7a">1,00</div>
<div class="t" style="left:85px;width:400px;text-align:right;top:566.61px;font-size:10.5px;color:#1c1c7a">14,0000</div>
<div class="t" style="left:144px;width:400px;text-align:right;top:566.61px;font-size:10.5px;color:#1c1c7a">1,00</div>
<div class="t" style="left:552px;top:566.61px;font-size:10.5px;color:#1c1c7a">Stück</div>
<div class="t" style="left:587px;top:566.61px;font-size:10.5px;color:#1c1c7a">400008w</div>
<div class="t" style="left:658px;top:566.61px;font-size:10.5px;color:#1c1c7a">Spiegelschrank</div>
<div class="t" style="left:482px;width:400px;text-align:right;top:566.61px;font-size:10.5px;color:#1c1c7a">139,05</div>
<div class="t" style="left:612px;width:400px;text-align:right;top:566.61px;font-size:10.5px;color:#1c1c7a">139,05</div>
<div class="t" style="left:713px;width:400px;text-align:right;top:566.61px;font-size:10.5px;color:#1c1c7a">86,90</div>
<div class="t" style="left:772px;width:400px;text-align:right;top:566.61px;font-size:10.5px;color:#1c1c7a">19 %</div>
<div class="t" style="left:1180px;top:566.61px;font-size:10.5px;color:#1c1c7a">8420</div>
<div class="t" style="left:1227px;top:566.61px;font-size:10.5px;color:#1c1c7a">19.12.2014</div>
<div class="t" style="left:1286px;top:566.61px;font-size:10.5px;color:#1c1c7a">100</div>
<div class="t" style="left:1327px;top:566.61px;font-size:10.5px;color:#1c1c7a">2</div>
<div class="t" style="left:1386px;top:566.61px;font-size:10.5px;color:#1c1c7a">Verkauf</div>
<div class="t" style="left:1546px;top:566.61px;font-size:10.5px;color:#1c1c7a">3</div>
<div class="t" style="left:1615px;top:566.61px;font-size:10.5px;color:#1c1c7a">Keine Teilnahme</div>
<svg style="left:246px;top:566px;" width="12" height="14" viewBox="0 0 12 14"><path d="M0.5 0.5 H7.5 L10.5 3.5 V12.5 H0.5Z" fill="url(#dg)" stroke="#000"/><path d="M7.5 0.5 V3.5 H10.5" fill="#fff" stroke="#000"/></svg>
<div class="a" style="left:1575px;top:566px;width:12px;height:12px;background:#fff;border:1px solid #5a5a5a;border-radius:3px"></div>
<div class="t" style="left:262px;top:587.61px;font-size:10.5px;color:#1c1c7a">8</div>
<div class="t" style="left:298px;top:587.61px;font-size:10.5px;color:#1c1c7a">A</div>
<div class="t" style="left:20px;width:400px;text-align:right;top:587.61px;font-size:10.5px;color:#1c1c7a">1,00</div>
<div class="t" style="left:85px;width:400px;text-align:right;top:587.61px;font-size:10.5px;color:#1c1c7a">9,0000</div>
<div class="t" style="left:144px;width:400px;text-align:right;top:587.61px;font-size:10.5px;color:#1c1c7a">1,00</div>
<div class="t" style="left:552px;top:587.61px;font-size:10.5px;color:#1c1c7a">Stück</div>
<div class="t" style="left:587px;top:587.61px;font-size:10.5px;color:#1c1c7a">400005w</div>
<div class="t" style="left:658px;top:587.61px;font-size:10.5px;color:#1c1c7a">WC-Sitz "Universal"</div>
<div class="t" style="left:482px;width:400px;text-align:right;top:587.61px;font-size:10.5px;color:#1c1c7a">21,10</div>
<div class="t" style="left:612px;width:400px;text-align:right;top:587.61px;font-size:10.5px;color:#1c1c7a">21,10</div>
<div class="t" style="left:713px;width:400px;text-align:right;top:587.61px;font-size:10.5px;color:#1c1c7a">13,20</div>
<div class="t" style="left:772px;width:400px;text-align:right;top:587.61px;font-size:10.5px;color:#1c1c7a">19 %</div>
<div class="t" style="left:1180px;top:587.61px;font-size:10.5px;color:#1c1c7a">8420</div>
<div class="t" style="left:1227px;top:587.61px;font-size:10.5px;color:#1c1c7a">19.12.2014</div>
<div class="t" style="left:1286px;top:587.61px;font-size:10.5px;color:#1c1c7a">100</div>
<div class="t" style="left:1327px;top:587.61px;font-size:10.5px;color:#1c1c7a">2</div>
<div class="t" style="left:1386px;top:587.61px;font-size:10.5px;color:#1c1c7a">Verkauf</div>
<div class="t" style="left:1546px;top:587.61px;font-size:10.5px;color:#1c1c7a">3</div>
<div class="t" style="left:1615px;top:587.61px;font-size:10.5px;color:#1c1c7a">Keine Teilnahme</div>
<svg style="left:246px;top:587px;" width="12" height="14" viewBox="0 0 12 14"><path d="M0.5 0.5 H7.5 L10.5 3.5 V12.5 H0.5Z" fill="url(#dg)" stroke="#000"/><path d="M7.5 0.5 V3.5 H10.5" fill="#fff" stroke="#000"/></svg>
<div class="a" style="left:1575px;top:587px;width:12px;height:12px;background:#fff;border:1px solid #5a5a5a;border-radius:3px"></div>
<svg style="left:231px;top:440px;" width="8" height="12" viewBox="0 0 8 12"><path d="M0.5 0.5 L6.5 6 L0.5 11.5Z" fill="#000"/></svg>
<div class="a" style="left:1856px;top:418px;width:16px;height:484px;background:#f0f0f0"></div>
<div class="a" style="left:1863px;top:435px;width:2px;height:17px;background:#7a7a7a"></div>
<div class="a" style="left:226px;top:902px;width:1646px;height:16px;background:#f0f0f0"></div>
<div class="a" style="left:243px;top:909px;width:17px;height:2px;background:#8a8a8a"></div>
<div class="a" style="left:225px;top:918px;width:1648px;height:23px;background:#f0f0f0;border:1px solid #a0a0a0"></div>
<div class="a" style="left:228px;top:921px;width:67px;height:17px;background:#cce4f7;border:1px solid #2f7fc0;border-radius:4px"></div>
<svg style="left:241px;top:925px;" width="11" height="10" viewBox="0 0 11 10"><path d="M1 5 L4 8.3 L10 1.5" fill="none" stroke="#000" stroke-width="2"/></svg>
<div class="t" style="left:256px;top:924.61px;font-size:10.5px;color:#1e1e8c">Offen</div>
<div class="a" style="left:297px;top:921px;width:67px;height:17px;background:#cce4f7;border:1px solid #2f7fc0;border-radius:4px"></div>
<svg style="left:305px;top:925px;" width="11" height="10" viewBox="0 0 11 10"><path d="M1 5 L4 8.3 L10 1.5" fill="none" stroke="#000" stroke-width="2"/></svg>
<div class="t" style="left:320px;top:924.61px;font-size:10.5px;color:#000">Erledigt</div>
<div class="a" style="left:366px;top:921px;width:67px;height:17px;background:#cce4f7;border:1px solid #2f7fc0;border-radius:4px"></div>
<svg style="left:371px;top:925px;" width="11" height="10" viewBox="0 0 11 10"><path d="M1 5 L4 8.3 L10 1.5" fill="none" stroke="#000" stroke-width="2"/></svg>
<div class="t" style="left:386px;top:924.61px;font-size:10.5px;color:#1f5a22">Teilweise</div>
<div class="a" style="left:435px;top:921px;width:67px;height:17px;background:#cce4f7;border:1px solid #2f7fc0;border-radius:4px"></div>
<svg style="left:443px;top:925px;" width="11" height="10" viewBox="0 0 11 10"><path d="M1 5 L4 8.3 L10 1.5" fill="none" stroke="#000" stroke-width="2"/></svg>
<div class="t" style="left:458px;top:924.61px;font-size:10.5px;color:#6a3a3a">Manuell</div>
<div class="a" style="left:504px;top:919px;width:1px;height:21px;background:#a0a0a0"></div>
<div class="a" style="left:225px;top:944px;width:1648px;height:101px;background:#fff;border:1px solid #a0a0a0"></div>
<svg style="left:236px;top:951px;" width="9" height="6" viewBox="0 0 9 6"><path d="M0.8 0.8 L4.5 4.5 L8.2 0.8" fill="none" stroke="#222" stroke-width="1.5"/></svg>
<svg style="left:250px;top:947px;" width="14" height="12" viewBox="0 0 14 12"><path d="M1.5 3 Q1.5 1 3.5 1 H6 Q7 1 7.5 2.5 H12.5 V11.5 H2Z" fill="#e0d860" stroke="#666" stroke-width="0.9"/><path d="M0.6 5 H9.5 L13.3 11.5 H3.5Z" fill="url(#fg)" stroke="#666" stroke-width="0.9"/><path d="M12.5 4 V11.5" stroke="#222" stroke-width="1.3"/></svg>
<div class="t" style="left:271px;top:949.11px;font-size:10.5px;">vom Vorgängerbeleg übernommen: 1 Stück</div>
<svg style="left:270px;top:962px;" width="12" height="14" viewBox="0 0 12 14"><path d="M0.5 0.5 H7.5 L10.5 3.5 V12.5 H0.5Z" fill="url(#dg)" stroke="#000"/><path d="M7.5 0.5 V3.5 H10.5" fill="#fff" stroke="#000"/></svg>
<div class="t" style="left:289px;top:964.11px;font-size:10.5px;">Auftrag: AU586 vom: 23.09.2025 Position: 1 Menge: 1 Stück, davon übernommen: 1 Stück, noch offen: 0 Stück</div>
<svg style="left:252px;top:977px;" width="12" height="14" viewBox="0 0 12 14"><path d="M0.5 0.5 H7.5 L10.5 3.5 V12.5 H0.5Z" fill="url(#dg)" stroke="#000"/><path d="M7.5 0.5 V3.5 H10.5" fill="#fff" stroke="#000"/></svg>
<div class="t" style="left:271px;top:979.11px;font-size:10.5px;">Keine Nachfolger</div>
<svg style="left:236px;top:996px;" width="9" height="6" viewBox="0 0 9 6"><path d="M0.8 0.8 L4.5 4.5 L8.2 0.8" fill="none" stroke="#222" stroke-width="1.5"/></svg>
<svg style="left:250px;top:992px;" width="14" height="12" viewBox="0 0 14 12"><path d="M1.5 3 Q1.5 1 3.5 1 H6 Q7 1 7.5 2.5 H12.5 V11.5 H2Z" fill="#e0d860" stroke="#666" stroke-width="0.9"/><path d="M0.6 5 H9.5 L13.3 11.5 H3.5Z" fill="url(#fg)" stroke="#666" stroke-width="0.9"/><path d="M12.5 4 V11.5" stroke="#222" stroke-width="1.3"/></svg>
<div class="t" style="left:271px;top:994.11px;font-size:10.5px;">Lagerinformation Abgang</div>
<svg style="left:270px;top:1007px;" width="12" height="14" viewBox="0 0 12 14"><path d="M0.5 0.5 H7.5 L10.5 3.5 V12.5 H0.5Z" fill="url(#dg)" stroke="#000"/><path d="M7.5 0.5 V3.5 H10.5" fill="#fff" stroke="#000"/></svg>
<div class="t" style="left:289px;top:1009.11px;font-size:10.5px;">Lager: 100, Menge: -1 Stück</div>
<div class="t" style="left:231px;top:1048.61px;font-size:10.5px;">Gewicht:&nbsp; 8,000 kg</div>
<div class="t" style="left:356px;top:1048.61px;font-size:10.5px;">Erlös EUR: 333,60 = 37,50%</div>
<div class="t" style="left:548px;top:1048.61px;font-size:10.5px;">Netto EUR :&nbsp; 889,65</div>
<div class="t" style="left:707px;top:1048.61px;font-size:10.5px;">Brutto EUR :&nbsp; 1.058,68</div>
<svg style="left:1898px;top:237px;" width="17" height="16" viewBox="0 0 17 16"><path d="M1 1.5 H16 L10 8 V14.5 L8 13 V8Z" fill="none" stroke="#000" stroke-width="1.3" stroke-linejoin="round"/></svg>
<div class="t" style="left:1899px;top:258px;font-size:11px;transform-origin:0 0;transform:translate(12px,0) rotate(90deg)">Favoriten Filter</div>
<svg style="left:1787px;top:12px;" width="13" height="12" viewBox="0 0 13 12"><path d="M0.5 0.5 H12.5 V11.5 H0.5Z M0.5 3.5 H12.5 M6.5 10 V5.5 M4.3 7.5 L6.5 5.3 L8.7 7.5" fill="none" stroke="#fff" stroke-width="1" stroke-linejoin="round" stroke-linecap="round" /></svg>
<svg style="left:1825px;top:18px;" width="11" height="2" viewBox="0 0 11 2"><path d="M0 0.5 H10.5" fill="none" stroke="#fff" stroke-width="1" stroke-linejoin="round" stroke-linecap="round" /></svg>
<svg style="left:1860px;top:12px;" width="12" height="12" viewBox="0 0 12 12"><path d="M0.5 3.5 H8.5 V11.5 H0.5Z M3 3.5 V1.5 Q3 0.5 4 0.5 H10.5 Q11.5 0.5 11.5 1.5 V8 Q11.5 9 10.5 9 H8.5" fill="none" stroke="#fff" stroke-width="1" stroke-linejoin="round" stroke-linecap="round" /></svg>
<svg style="left:1897px;top:12px;" width="11" height="11" viewBox="0 0 11 11"><path d="M0.5 0.5 L10.5 10.5 M10.5 0.5 L0.5 10.5" fill="none" stroke="#fff" stroke-width="1.1" stroke-linejoin="round" stroke-linecap="round" /></svg>
<svg style="left:23px;top:45px;" width="20" height="13" viewBox="0 0 20 13"><path d="M1 1.5 Q1 0.8 1.8 0.8 H18.2 Q19 0.8 19 1.5 V11.2 Q19 12 18.2 12 H1.8 Q1 12 1 11.2Z M12.5 1 V12" fill="none" stroke="#1f1f1f" stroke-width="1.3" stroke-linejoin="round" stroke-linecap="round" /><path d="M4 4 H10 M4 6.5 H10 M4 9 H10 M15.5 4 V4.2 M15.5 6.5 V6.7 M15.5 9 V9.2" fill="none" stroke="#1f1f1f" stroke-width="1.4" stroke-linejoin="round" stroke-linecap="round" /></svg>
<svg style="left:1807px;top:42px;" width="18" height="16" viewBox="0 0 18 16"><path d="M1.5 0.8 H16 Q17 0.8 17 1.8 V11.5 Q17 12.5 16 12.5 H8 L4.5 15.3 V12.5 H1.5 Q0.8 12.5 0.8 11.5 V1.8 Q0.8 0.8 1.5 0.8Z M9 3.5 V8 M9 10 V10.3" fill="none" stroke="#1f1f1f" stroke-width="1.1" stroke-linejoin="round" stroke-linecap="round" /></svg>
<svg style="left:1832px;top:48px;" width="8" height="5" viewBox="0 0 8 5"><path d="M0.5 0.5 L3.75 3.75 L7 0.5" fill="none" stroke="#1f1f1f" stroke-width="1.1" stroke-linejoin="round" stroke-linecap="round" /></svg>
<svg style="left:1850px;top:49px;" width="11" height="2" viewBox="0 0 11 2"><path d="M0 0.5 H10.5" fill="none" stroke="#1f1f1f" stroke-width="1" stroke-linejoin="round" stroke-linecap="round" /></svg>
<svg style="left:1875px;top:43px;" width="12" height="12" viewBox="0 0 12 12"><path d="M0.5 3.5 H8.5 V11.5 H0.5Z M3 3.5 V1.5 Q3 0.5 4 0.5 H10.5 Q11.5 0.5 11.5 1.5 V8 Q11.5 9 10.5 9 H8.5" fill="none" stroke="#1f1f1f" stroke-width="1.1" stroke-linejoin="round" stroke-linecap="round" /></svg>
<svg style="left:1901px;top:43px;" width="11" height="11" viewBox="0 0 11 11"><path d="M0.5 0.5 L10.5 10.5 M10.5 0.5 L0.5 10.5" fill="none" stroke="#1f1f1f" stroke-width="1.1" stroke-linejoin="round" stroke-linecap="round" /></svg>
<svg style="left:1883px;top:149px;" width="10" height="6" viewBox="0 0 10 6"><path d="M0.5 5.5 L5 1 L9.5 5.5" fill="none" stroke="#1f1f1f" stroke-width="1.2" stroke-linejoin="round" stroke-linecap="round" /></svg>
<svg style="left:39px;top:75px;" width="27" height="24" viewBox="0 0 27 24"><path d="M1 2 Q1 0.8 2.2 0.8 H6 Q7 0.8 7 2 V9.3 L15.7 5.3 V9.3 L25 5.3 V21.5 Q25 22.8 23.8 22.8 H2.2 Q1 22.8 1 21.5Z" fill="none" stroke="#1f1f1f" stroke-width="1.3" stroke-linejoin="round" stroke-linecap="round" /><path d="M4.7 16.3a2 2 0 1 0 4 0a2 2 0 1 0-4 0Z M11 16.3a2 2 0 1 0 4 0a2 2 0 1 0-4 0Z M17.5 16.3a2 2 0 1 0 4 0a2 2 0 1 0-4 0Z" fill="#40718f"/></svg>
<svg style="left:88px;top:74px;" width="33" height="27" viewBox="0 0 33 27"><path d="M1 26 V7 L16 0.8 L31 7 V26" fill="none" stroke="#1f1f1f" stroke-width="1.3" stroke-linejoin="round" stroke-linecap="round" /><path d="M6 26 V10.5 H27 V26 M6 15 H27 M6 20.5 H27" fill="none" stroke="#1f1f1f" stroke-width="1.3" stroke-linejoin="round" stroke-linecap="round" /><path d="M0.5 25.8 H31.5" fill="none" stroke="#9a9a9a" stroke-width="1" stroke-linejoin="round" stroke-linecap="round" /></svg>
<svg style="left:139px;top:74px;" width="33" height="27" viewBox="0 0 33 27"><path d="M1 26 V7 L16 0.8 L31 7 V26" fill="none" stroke="#1f1f1f" stroke-width="1.3" stroke-linejoin="round" stroke-linecap="round" /><path d="M6 26 V10.5 H27 V26 M6 15 H27 M6 20.5 H27" fill="none" stroke="#1f1f1f" stroke-width="1.3" stroke-linejoin="round" stroke-linecap="round" /><path d="M0.5 25.8 H31.5" fill="none" stroke="#9a9a9a" stroke-width="1" stroke-linejoin="round" stroke-linecap="round" /><path d="M27 13.5 a5.2 5.2 0 0 1 5.2 5.2 c0 3.3 -5.2 7.3 -5.2 7.3 c0 0 -5.2 -4 -5.2 -7.3 a5.2 5.2 0 0 1 5.2 -5.2Z" fill="#c4527c"/><path d="M27 13.5 a5.2 5.2 0 0 1 5.2 5.2 c0 3.3 -5.2 7.3 -5.2 7.3 c0 0 -5.2 -4 -5.2 -7.3 a5.2 5.2 0 0 1 5.2 -5.2Z" fill="none" stroke="#6a2040" stroke-width="0.8" stroke-linejoin="round" stroke-linecap="round" /><path d="M25.5 18.5 a1.5 1.5 0 1 0 3 0 a1.5 1.5 0 1 0 -3 0Z" fill="#fff"/></svg>
<svg style="left:220px;top:75px;" width="31" height="24" viewBox="0 0 31 24"><path d="M3.5 1 H26.5 Q29.5 1 29.5 4 V19.5 Q29.5 22.5 26.5 22.5 H3.5 Q0.8 22.5 0.8 19.5 V4 Q0.8 1 3.5 1Z" fill="none" stroke="#3a3a3a" stroke-width="1.6" stroke-linejoin="round" stroke-linecap="round" /><path d="M5.5 6 V17.5 M8.3 6 V17.5 M11.1 6 V17.5 M13.9 6 V17.5 M16.7 6 V17.5 M19.5 6 V17.5 M22.3 6 V17.5 M25 6 V17.5" fill="none" stroke="#3a3a3a" stroke-width="1.2" stroke-linejoin="round" stroke-linecap="round" /></svg>
<svg style="left:310px;top:74px;" width="33" height="27" viewBox="0 0 33 27"><path d="M1 26 V7 L16 0.8 L31 7 V26" fill="none" stroke="#1f1f1f" stroke-width="1.3" stroke-linejoin="round" stroke-linecap="round" /><path d="M6 26 V10.5 H27 V26 M6 15 H27 M6 20.5 H27" fill="none" stroke="#1f1f1f" stroke-width="1.3" stroke-linejoin="round" stroke-linecap="round" /><path d="M0.5 25.8 H31.5" fill="none" stroke="#9a9a9a" stroke-width="1" stroke-linejoin="round" stroke-linecap="round" /><path d="M18 15 H30.3 V27 H18Z" fill="#fff"/><path d="M6 26 V13 M18 13 H27 V13" fill="none" stroke="#1f1f1f" stroke-width="1.3" stroke-linejoin="round" stroke-linecap="round" /><path d="M21.5 17 H26.5 V14.3 L31 17.8 L26.5 21.3 V19 H21.5Z M28.5 22 H23.5 V19.7 L19 23.2 L23.5 26.7 V24.5 H28.5Z" fill="#fff" stroke="#3d9bd3" stroke-width="1.1" stroke-linejoin="round" stroke-linecap="round" /></svg>
<svg style="left:394px;top:74px;" width="33" height="27" viewBox="0 0 33 27"><path d="M1 26 V7 L16 0.8 L31 7 V26" fill="none" stroke="#1f1f1f" stroke-width="1.3" stroke-linejoin="round" stroke-linecap="round" /><path d="M6 26 V10.5 H27 V26 M6 15 H27 M6 20.5 H27" fill="none" stroke="#1f1f1f" stroke-width="1.3" stroke-linejoin="round" stroke-linecap="round" /><path d="M0.5 25.8 H31.5" fill="none" stroke="#9a9a9a" stroke-width="1" stroke-linejoin="round" stroke-linecap="round" /><path d="M21 13 H31.5 V26 H21Z" fill="#f0b060"/><path d="M21 13 H31.5 V26 H21Z M23.5 16.5 H29 M23.5 19.5 H29 M23.5 22.5 H27" fill="none" stroke="#4a3a20" stroke-width="1" stroke-linejoin="round" stroke-linecap="round" /></svg>
<svg style="left:491px;top:70px;" width="34" height="34" viewBox="0 0 34 34"><path d="M4 10 Q1 10 1 13 V29 Q1 32 4 32 H14 M23.5 18 V13 Q23.5 10 20.5 10 M8 10 Q8 5 11 4 Q12.3 1 13.5 1 Q14.7 1 16 4 Q19 5 19 10 Q19 11.5 17.5 11.5 H9.5 Q8 11.5 8 10Z" fill="none" stroke="#1f1f1f" stroke-width="1.3" stroke-linejoin="round" stroke-linecap="round" /><path d="M12.3 5.2a1.2 1.2 0 1 0 2.4 0a1.2 1.2 0 1 0 -2.4 0Z" fill="#1f1f1f"/><path d="M5 17 L7 19 L10.5 15 M13 17.5 H19 M13 25 H17" fill="none" stroke="#1f1f1f" stroke-width="1.2" stroke-linejoin="round" stroke-linecap="round" /><path d="M5 24a1 1 0 1 0 2 0a1 1 0 1 0 -2 0Z" fill="#1f1f1f"/><path d="M17 32 L18 27 L29.5 15.5 L32.5 18.5 L21 30Z" fill="#4eaee0"/><path d="M17 32 L18 27 L29.5 15.5 L32.5 18.5 L21 30Z M27.5 17.5 L30.5 20.5" fill="none" stroke="#1f1f1f" stroke-width="1.1" stroke-linejoin="round" stroke-linecap="round" /></svg>
<svg style="left:576px;top:72px;" width="34" height="32" viewBox="0 0 34 32"><path d="M4 8 Q1 8 1 11 V26 Q1 29 4 29 H15 M21.5 14 V11 Q21.5 8 18.5 8 M6.5 8 Q6.5 4 9.5 3 Q10.7 0.8 11.2 0.8 Q11.7 0.8 13 3 Q16 4 16 8 Q16 9.5 14.5 9.5 H8 Q6.5 9.5 6.5 8Z M5 18 L9 22 L16.5 15" fill="none" stroke="#333" stroke-width="1.3" stroke-linejoin="round" stroke-linecap="round" /><path d="M10.2 4.3a1 1 0 1 0 2 0a1 1 0 1 0 -2 0Z" fill="#1f1f1f"/><path d="M19.2 18.5 A6.3 6.3 0 1 1 19.5 25 M19.2 15.5 V18.8 H22.5 M25.3 19 V22 L27.3 24" fill="none" stroke="#b87a3a" stroke-width="1.4" stroke-linejoin="round" stroke-linecap="round" /></svg>
<svg style="left:659px;top:73px;" width="17" height="14" viewBox="0 0 17 14"><path d="M0.5 1 V13.5 M15.5 1 V8 M0.5 12.5 H15.5" fill="none" stroke="#2a2a2a" stroke-width="1.1" stroke-linejoin="round" stroke-linecap="round" /><path d="M2 4 H13.5 V5.5 H2Z" fill="#9a9a9a"/><path d="M2 8.5 H12 V11 H2Z" fill="none" stroke="#444" stroke-width="0.9" stroke-linejoin="round" stroke-linecap="round" /><path d="M8.5 1.5 V3.5" fill="none" stroke="#333" stroke-width="1" stroke-linejoin="round" stroke-linecap="round" /><path d="M10.5 8 H16 V13.5 H10.5Z" fill="#c04a72"/><path d="M10.5 8 H16 V13.5 H10.5Z" fill="none" stroke="#5a2035" stroke-width="0.8" stroke-linejoin="round" stroke-linecap="round" /></svg>
<svg style="left:659px;top:99px;" width="17" height="14" viewBox="0 0 17 14"><path d="M0.5 1 V13.5 M15.5 1 V8 M0.5 12.5 H15.5" fill="none" stroke="#2a2a2a" stroke-width="1.1" stroke-linejoin="round" stroke-linecap="round" /><path d="M2 4 H13.5 V5.5 H2Z" fill="#9a9a9a"/><path d="M2 8.5 H12 V11 H2Z" fill="none" stroke="#444" stroke-width="0.9" stroke-linejoin="round" stroke-linecap="round" /><path d="M8.5 1.5 V3.5" fill="none" stroke="#333" stroke-width="1" stroke-linejoin="round" stroke-linecap="round" /><path d="M13.3 7.5a3.3 3.3 0 1 0 0.01 0Z" fill="#c04a72"/><path d="M13.3 9 V11 H14.5" fill="none" stroke="#222" stroke-width="0.8" stroke-linejoin="round" stroke-linecap="round" /></svg>
<svg style="left:659px;top:125px;" width="17" height="14" viewBox="0 0 17 14"><path d="M0.5 1 V13.5 M15.5 1 V8 M0.5 12.5 H15.5" fill="none" stroke="#2a2a2a" stroke-width="1.1" stroke-linejoin="round" stroke-linecap="round" /><path d="M2 4 H13.5 V5.5 H2Z" fill="#9a9a9a"/><path d="M2 8.5 H12 V11 H2Z" fill="none" stroke="#444" stroke-width="0.9" stroke-linejoin="round" stroke-linecap="round" /><path d="M8.5 1.5 V3.5" fill="none" stroke="#333" stroke-width="1" stroke-linejoin="round" stroke-linecap="round" /><path d="M11 7 H15.5 V13.5 H11Z" fill="#f0b060"/><path d="M11 7 H15.5 V13.5 H11Z" fill="none" stroke="#5a4020" stroke-width="0.8" stroke-linejoin="round" stroke-linecap="round" /></svg>
<svg style="left:787px;top:72px;" width="34" height="31" viewBox="0 0 34 31"><path d="M2.5 1 H13.5 L20 7.5 V11 M13.5 1 V7.5 H20 M1 2.5 V27.5 Q1 29.5 3 29.5 H9" fill="none" stroke="#1f1f1f" stroke-width="1.4" stroke-linejoin="round" stroke-linecap="round" /><path d="M1 2.5 Q1 1 2.5 1" fill="none" stroke="#1f1f1f" stroke-width="1.4" stroke-linejoin="round" stroke-linecap="round" /><path d="M5.8 21.5 V25.5 M10 14 V25.5 M14.5 20 V25" fill="none" stroke="#c99040" stroke-width="2.2" stroke-linejoin="round" stroke-linecap="round" /><path d="M20 14 H26.5 V20.5 H20Z M15 22 H21.5 V28.5 H15Z M24 22 H30.5 V28.5 H24Z" fill="none" stroke="#1f1f1f" stroke-width="1.3" stroke-linejoin="round" stroke-linecap="round" /></svg>
<svg style="left:831px;top:74px;" width="34" height="27" viewBox="0 0 34 27"><path d="M2.5 1 H13 L18 6 V10 M13 1 V6 H18 M1 2.5 V23 Q1 24.7 2.7 24.7 H9 M1 2.5 Q1 1 2.5 1" fill="none" stroke="#1f1f1f" stroke-width="1.4" stroke-linejoin="round" stroke-linecap="round" /><path d="M5 18 V21 M9 12 V21 M12.5 16 V21" fill="none" stroke="#c99040" stroke-width="2" stroke-linejoin="round" stroke-linecap="round" /><path d="M17 25 V14 L24 10.5 L31.5 14 V25 Z M19.5 17.5 H29 V25 H19.5Z M19.5 20 H29 M19.5 22.5 H29" fill="none" stroke="#1f1f1f" stroke-width="1.2" stroke-linejoin="round" stroke-linecap="round" /></svg>
<svg style="left:22px;top:176px;" width="18" height="16" viewBox="0 0 18 16"><path d="M1 3 V12.5 Q1 14 4 14 H5 M1 3 Q1 1.5 4 1.5 Q7 1.5 7 3 Q7 4.3 4 4.3 Q1 4.3 1 3 M10.5 3 Q10.5 1.5 13.5 1.5 Q16.5 1.5 16.5 3 V12.5 Q16.5 14 13.5 14 H12 M10.5 3 Q10.5 4.3 13.5 4.3 Q16.5 4.3 16.5 3" fill="none" stroke="#8a8a8a" stroke-width="1" stroke-linejoin="round" stroke-linecap="round" /><path d="M5 6 Q5 4.5 8.5 4.5 Q12 4.5 12 6 V14 Q12 15.5 8.5 15.5 Q5 15.5 5 14Z" fill="#f5a850"/><path d="M5 6 Q5 4.5 8.5 4.5 Q12 4.5 12 6 V14 Q12 15.5 8.5 15.5 Q5 15.5 5 14Z M5 6 Q5 7.4 8.5 7.4 Q12 7.4 12 6" fill="none" stroke="#9a6a30" stroke-width="0.8" stroke-linejoin="round" stroke-linecap="round" /></svg>
<svg style="left:45px;top:176px;" width="18" height="17" viewBox="0 0 18 17"><path d="M1 2.5 Q1 1 2.5 1 H10.5 Q12 1 12 2.5 V8 M1 2.5 V13.5 Q1 15 2.5 15 H8 M1 3 H12" fill="none" stroke="#333" stroke-width="1.1" stroke-linejoin="round" stroke-linecap="round" /><path d="M16.50 12.50 L17.56 13.59 L17.14 14.60 L15.62 14.62 L15.00 15.10 L14.59 16.56 L13.50 16.70 L12.72 15.40 L12.00 15.10 L10.53 15.47 L9.86 14.60 L10.60 13.28 L10.50 12.50 L9.44 11.41 L9.86 10.40 L11.38 10.38 L12.00 9.90 L12.41 8.44 L13.50 8.30 L14.28 9.60 L15.00 9.90 L16.47 9.53 L17.14 10.40 L16.40 11.72Z" fill="#f0a040"/><path d="M13.5 11 a1.5 1.5 0 1 0 0.01 0Z" fill="none" stroke="#8a5a20" stroke-width="0.9" stroke-linejoin="round" stroke-linecap="round" /></svg>
<svg style="left:67px;top:181px;" width="7" height="5" viewBox="0 0 7 5"><path d="M0.5 0.5 L3.5 3.5 L6.5 0.5" fill="none" stroke="#333" stroke-width="1.1" stroke-linejoin="round" stroke-linecap="round" /></svg>
<svg style="left:77px;top:176px;" width="16" height="16" viewBox="0 0 16 16"><path d="M4.5 1 H10.5 V7 H4.5Z M1 8 H7 V14.5 H1Z" fill="none" stroke="#222" stroke-width="1.2" stroke-linejoin="round" stroke-linecap="round" /><path d="M8.3 8 H15 V14.5 H8.3Z" fill="#42a0d8"/><path d="M8.3 8 H15 V14.5 H8.3Z" fill="none" stroke="#222" stroke-width="1.1" stroke-linejoin="round" stroke-linecap="round" /></svg>
<svg style="left:98px;top:181px;" width="7" height="5" viewBox="0 0 7 5"><path d="M0.5 0.5 L3.5 3.5 L6.5 0.5" fill="none" stroke="#333" stroke-width="1.1" stroke-linejoin="round" stroke-linecap="round" /></svg>
<svg style="left:108px;top:176px;" width="17" height="16" viewBox="0 0 17 16"><path d="M6 1.2 a3 3 0 1 0 0.01 0Z M1 14.5 Q1 9.5 6 9.5 Q8.5 9.5 9.5 10.5" fill="none" stroke="#222" stroke-width="1.2" stroke-linejoin="round" stroke-linecap="round" /><path d="M1 14.5 H9" fill="none" stroke="#999" stroke-width="1.2" stroke-linejoin="round" stroke-linecap="round" /><path d="M10 9.5 H16.5 L15 13 H11.2Z" fill="#3d8fa8"/><path d="M9 8.5 L10 9.5 M11.5 14.8 V15 M14.5 14.8 V15" fill="none" stroke="#222" stroke-width="1.2" stroke-linejoin="round" stroke-linecap="round" /></svg>
<svg style="left:130px;top:181px;" width="7" height="5" viewBox="0 0 7 5"><path d="M0.5 0.5 L3.5 3.5 L6.5 0.5" fill="none" stroke="#333" stroke-width="1.1" stroke-linejoin="round" stroke-linecap="round" /></svg>
<svg style="left:139px;top:176px;" width="17" height="16" viewBox="0 0 17 16"><path d="M6 1.2 a3 3 0 1 0 0.01 0Z M1 14.5 Q1 9.5 6 9.5 Q7.5 9.5 8.5 10" fill="none" stroke="#222" stroke-width="1.2" stroke-linejoin="round" stroke-linecap="round" /><path d="M1 14.5 H8" fill="none" stroke="#999" stroke-width="1.2" stroke-linejoin="round" stroke-linecap="round" /><path d="M8.5 9.5 H13 V14 H8.5Z" fill="#f0a040"/><path d="M13 11 H15 L16.5 13 V14 H13Z" fill="#222"/><path d="M10 14.5a1.2 1.2 0 1 0 0.01 0Z M14.5 14.5a1.2 1.2 0 1 0 0.01 0Z" fill="#222"/></svg>
<svg style="left:159px;top:181px;" width="7" height="5" viewBox="0 0 7 5"><path d="M0.5 0.5 L3.5 3.5 L6.5 0.5" fill="none" stroke="#333" stroke-width="1.1" stroke-linejoin="round" stroke-linecap="round" /></svg>
<svg style="left:170px;top:176px;" width="17" height="16" viewBox="0 0 17 16"><path d="M1 3 Q1 2 2 2 H6 L7.5 3.5 H13 V6 M1 3 V13 H9 M3.5 6 H15.5 L13 13" fill="none" stroke="#333" stroke-width="1.1" stroke-linejoin="round" stroke-linecap="round" /><path d="M10 14.5 L15.5 9" fill="none" stroke="#3d8fc0" stroke-width="2" stroke-linejoin="round" stroke-linecap="round" /></svg>
<svg style="left:193px;top:176px;" width="16" height="16" viewBox="0 0 16 16"><path d="M1 3 H15 V13 H1Z M3 6 H7 V10 H3Z M9 6 H13 M9 9 H12" fill="none" stroke="#c8c8c8" stroke-width="1.1" stroke-linejoin="round" stroke-linecap="round" /></svg>
<svg style="left:216px;top:176px;" width="16" height="16" viewBox="0 0 16 16"><path d="M1 3 H15 V13 H1Z M3 6 H7 V10 H3Z M9 6 H13 M9 9 H12" fill="none" stroke="#c8c8c8" stroke-width="1.1" stroke-linejoin="round" stroke-linecap="round" /></svg>
<svg style="left:239px;top:176px;" width="16" height="16" viewBox="0 0 16 16"><path d="M1 3 H15 V13 H1Z M3 6 H7 V10 H3Z M9 6 H13 M9 9 H12" fill="none" stroke="#c8c8c8" stroke-width="1.1" stroke-linejoin="round" stroke-linecap="round" /></svg>
<svg style="left:261px;top:176px;" width="17" height="16" viewBox="0 0 17 16"><path d="M7 0.8 a6.2 6.2 0 1 0 0.01 0Z M0.8 7 H13.2 M7 0.8 C3.5 3.5 3.5 10.5 7 13.2 M7 0.8 C10.5 3.5 10.5 10.5 7 13.2 M1.8 3.8 H12.2 M1.8 10.2 H8" fill="none" stroke="#333" stroke-width="1" stroke-linejoin="round" stroke-linecap="round" /><path d="M8 8 H17 V16 H8Z" fill="#f9f9f9"/></svg>
<div class="t" style="left:267.5px;top:184.3px;font-size:8.5px;color:#2a7fc0;font-weight:bold;letter-spacing:-0.6px">SL</div>
<svg style="left:288px;top:176px;" width="10" height="16" viewBox="0 0 10 16"><path d="M1.5 4.5 Q1.5 1 5 1 Q8.5 1 8.5 4.3 Q8.5 6.5 5.5 8 V10.5" fill="none" stroke="#2f8fd0" stroke-width="2" stroke-linejoin="round" stroke-linecap="round" /><path d="M4 13 H7 V15.5 H4Z" fill="#2f8fd0"/></svg>
<svg style="left:307px;top:176px;" width="17" height="16" viewBox="0 0 17 16"><path d="M3 15 V1 H13 V15 M1 15 H15.5 M10.5 8 V8.5" fill="none" stroke="#333" stroke-width="1.2" stroke-linejoin="round" stroke-linecap="round" /></svg>
<svg style="left:335px;top:179px;" width="8" height="9" viewBox="0 0 8 9"><path d="M0.5 0.5 H7.5 M0.8 3.5 L4 6.8 L7.2 3.5" fill="none" stroke="#333" stroke-width="1.1" stroke-linejoin="round" stroke-linecap="round" /></svg>
<svg style="left:6px;top:207px;" width="16" height="16" viewBox="0 0 16 16"><path d="M1 2 V14 M15 8 H3 M8 3 L3 8 L8 13" fill="none" stroke="#1f1f1f" stroke-width="1.3" stroke-linejoin="round" stroke-linecap="round" /></svg>
<svg style="left:29px;top:207px;" width="16" height="16" viewBox="0 0 16 16"><path d="M15 8 H2 M7 3 L2 8 L7 13" fill="none" stroke="#1f1f1f" stroke-width="1.3" stroke-linejoin="round" stroke-linecap="round" /></svg>
<svg style="left:52px;top:207px;" width="16" height="16" viewBox="0 0 16 16"><path d="M2.5 5 A6.5 6.5 0 1 1 2 9.5 M1.5 1.5 V5.5 H5.5" fill="none" stroke="#1f1f1f" stroke-width="1.3" stroke-linejoin="round" stroke-linecap="round" /><path d="M9 4.5 V8.5 L11 11" fill="none" stroke="#2f7faa" stroke-width="1.2" stroke-linejoin="round" stroke-linecap="round" /></svg>
<svg style="left:75px;top:207px;" width="16" height="16" viewBox="0 0 16 16"><path d="M1 8 H14 M9 3 L14 8 L9 13" fill="none" stroke="#a8a8a8" stroke-width="1.3" stroke-linejoin="round" stroke-linecap="round" /></svg>
<svg style="left:98px;top:207px;" width="16" height="16" viewBox="0 0 16 16"><path d="M0 8 H12 M7 3 L12 8 L7 13 M15 2 V14" fill="none" stroke="#a8a8a8" stroke-width="1.3" stroke-linejoin="round" stroke-linecap="round" /></svg>
<div class="a" style="left:120px;top:205px;width:1px;height:19px;background:#c8c8c8"></div>
<div class="a" style="left:151px;top:205px;width:1px;height:19px;background:#c8c8c8"></div>
<div class="a" style="left:298px;top:205px;width:1px;height:19px;background:#c8c8c8"></div>
<div class="a" style="left:349px;top:205px;width:1px;height:19px;background:#c8c8c8"></div>
<div class="a" style="left:402px;top:205px;width:1px;height:19px;background:#c8c8c8"></div>
<div class="a" style="left:432px;top:205px;width:1px;height:19px;background:#c8c8c8"></div>
<div class="a" style="left:485px;top:205px;width:1px;height:19px;background:#c8c8c8"></div>
<svg style="left:128px;top:207px;" width="18" height="16" viewBox="0 0 18 16"><path d="M1 1.5 H17 V5 H1Z" fill="#3d8fd0"/><path d="M1 1.5 H17 V14.5 H1Z M1 5.5 H17 M1 10 H17 M9 5.5 V14.5" fill="none" stroke="#1f1f1f" stroke-width="1.3" stroke-linejoin="round" stroke-linecap="round" /></svg>
<svg style="left:160px;top:207px;" width="17" height="16" viewBox="0 0 17 16"><path d="M2 7 A6.5 6.5 0 0 1 14 5 M15 9 A6.5 6.5 0 0 1 3 11 M14.5 1.5 V5.5 H10.5 M2.5 14.5 V10.5 H6.5" fill="none" stroke="#1f1f1f" stroke-width="1.3" stroke-linejoin="round" stroke-linecap="round" /></svg>
<svg style="left:182px;top:207px;" width="17" height="17" viewBox="0 0 17 17"><path d="M1 1 H8.5 L12 4.5 V9 M8.5 1 V4.5 H12 M1 1 V15 H8" fill="none" stroke="#1f1f1f" stroke-width="1.2" stroke-linejoin="round" stroke-linecap="round" /><path d="M13 11 V16.5 M10.3 13.7 H15.8" fill="none" stroke="#2a8a6a" stroke-width="1.4" stroke-linejoin="round" stroke-linecap="round" /></svg>
<svg style="left:206px;top:207px;" width="17" height="17" viewBox="0 0 17 17"><path d="M5.5 1 H14 Q15.5 1 15.5 2.5 V11 Q15.5 12.5 14 12.5 H5.5 Q4 12.5 4 11 V2.5 Q4 1 5.5 1Z" fill="none" stroke="#2a7fc0" stroke-width="1.3" stroke-linejoin="round" stroke-linecap="round" /><path d="M4 4 H2.5 Q1 4 1 5.5 V14 Q1 15.5 2.5 15.5 H11 Q12.5 15.5 12.5 14 V12.5" fill="none" stroke="#1f1f1f" stroke-width="1.3" stroke-linejoin="round" stroke-linecap="round" /></svg>
<svg style="left:229px;top:207px;" width="16" height="16" viewBox="0 0 16 16"><path d="M1 1 H12 L15 4 V15 H1Z M4 1 V5 H11 V1 M5.5 10.5 a2 2 0 1 0 0.01 0Z" fill="none" stroke="#a8a8a8" stroke-width="1.2" stroke-linejoin="round" stroke-linecap="round" /></svg>
<svg style="left:252px;top:207px;" width="16" height="16" viewBox="0 0 16 16"><path d="M3 5 A6.5 6.5 0 1 1 2 10 M2.5 1.5 V5.5 H6.5" fill="none" stroke="#a8a8a8" stroke-width="1.3" stroke-linejoin="round" stroke-linecap="round" /></svg>
<svg style="left:275px;top:207px;" width="17" height="17" viewBox="0 0 17 17"><path d="M1 1 H8.5 L12 4.5 V8 M8.5 1 V4.5 H12 M1 1 V15 H8" fill="none" stroke="#1f1f1f" stroke-width="1.2" stroke-linejoin="round" stroke-linecap="round" /><path d="M10 10 L16 16 M16 10 L10 16" fill="none" stroke="#c0405a" stroke-width="1.3" stroke-linejoin="round" stroke-linecap="round" /></svg>
<svg style="left:310px;top:207px;" width="16" height="16" viewBox="0 0 16 16"><path d="M4 1 H12 M5.5 1 V7 L3 10 H13 L10.5 7 V1 M8 10 V15.5" fill="none" stroke="#1f1f1f" stroke-width="1.3" stroke-linejoin="round" stroke-linecap="round" /></svg>
<svg style="left:336px;top:213px;" width="8" height="5" viewBox="0 0 8 5"><path d="M0 0 H8 L4 4.5Z" fill="#1f1f1f"/></svg>
<svg style="left:362px;top:207px;" width="17" height="16" viewBox="0 0 17 16"><path d="M1 1.5 H16 L10 8.5 V14.5 L7 13 V8.5Z" fill="none" stroke="#1f1f1f" stroke-width="1.3" stroke-linejoin="round" stroke-linecap="round" /></svg>
<svg style="left:388px;top:213px;" width="8" height="5" viewBox="0 0 8 5"><path d="M0 0 H8 L4 4.5Z" fill="#1f1f1f"/></svg>
<svg style="left:409px;top:207px;" width="18" height="17" viewBox="0 0 18 17"><path d="M12.70 7.50 L14.37 8.87 L13.97 10.18 L11.82 10.39 L11.18 11.18 L11.39 13.32 L10.18 13.97 L8.51 12.60 L7.50 12.70 L6.13 14.37 L4.82 13.97 L4.61 11.82 L3.82 11.18 L1.68 11.39 L1.03 10.18 L2.40 8.51 L2.30 7.50 L0.63 6.13 L1.03 4.82 L3.18 4.61 L3.82 3.82 L3.61 1.68 L4.82 1.03 L6.49 2.40 L7.50 2.30 L8.87 0.63 L10.18 1.03 L10.39 3.18 L11.18 3.82 L13.32 3.61 L13.97 4.82 L12.60 6.49Z" fill="none" stroke="#2f80b8" stroke-width="1.1" stroke-linejoin="round" stroke-linecap="round" /><path d="M7.5 5.3 a2.2 2.2 0 1 0 0.01 0Z" fill="none" stroke="#2f80b8" stroke-width="1.1" stroke-linejoin="round" stroke-linecap="round" /><path d="M11 10 H18 V17 H11Z" fill="#f3f3f3"/><path d="M14 11 V16.5 M11.3 13.7 H16.7" fill="none" stroke="#222" stroke-width="1.2" stroke-linejoin="round" stroke-linecap="round" /></svg>
<svg style="left:444px;top:207px;" width="18" height="16" viewBox="0 0 18 16"><path d="M4 5 V1 H14 V5 M2 5 H16 Q17 5 17 6 V12 Q17 13 16 13 H14 M4 13 H2 Q1 13 1 12 V6 Q1 5 2 5 M4 10 H14 V15 H4Z" fill="none" stroke="#1f1f1f" stroke-width="1.3" stroke-linejoin="round" stroke-linecap="round" /></svg>
<svg style="left:471px;top:213px;" width="8" height="5" viewBox="0 0 8 5"><path d="M0 0 H8 L4 4.5Z" fill="#1f1f1f"/></svg>
<svg style="left:493px;top:207px;" width="17" height="16" viewBox="0 0 17 16"><path d="M3 15 V1 H13 V15 M1 15 H15.5 M10.5 8 V8.5" fill="none" stroke="#1f1f1f" stroke-width="1.2" stroke-linejoin="round" stroke-linecap="round" /></svg>
<svg style="left:224px;top:240px;" width="13" height="13" viewBox="0 0 13 13"><path d="M1 1 H12 V4 H1Z" fill="#3d8fd0"/><path d="M1 1 H12 V12 H1Z M1 4 H12 M1 7 H12 M1 9.5 H12 M4.5 4 V12 M8.5 4 V12" fill="none" stroke="#7a8aa0" stroke-width="0.8" stroke-linejoin="round" stroke-linecap="round" /></svg>
<svg style="left:697px;top:360px;" width="13" height="13" viewBox="0 0 13 13"><path d="M1 1 H12 V4 H1Z" fill="#3d8fd0"/><path d="M1 1 H12 V12 H1Z M1 4 H12 M1 7 H12 M1 9.5 H12 M4.5 4 V12 M8.5 4 V12" fill="none" stroke="#7a8aa0" stroke-width="0.8" stroke-linejoin="round" stroke-linecap="round" /></svg>
<svg style="left:656px;top:241px;" width="8" height="11" viewBox="0 0 8 11"><path d="M7 0.5 V10.5 L1.5 5.5Z" fill="#a8a8a8"/></svg>
<svg style="left:846px;top:241px;" width="8" height="11" viewBox="0 0 8 11"><path d="M1 0.5 V10.5 L6.5 5.5Z" fill="#000"/></svg>
<svg style="left:786px;top:244px;" width="9" height="6" viewBox="0 0 9 6"><path d="M0.5 0.5 H8.5 L4.5 5Z" fill="#000"/></svg>
<div class="a" style="left:0px;top:1080px;width:1920px;height:26px;background:#f0f0f0;border-top:1px solid #dcdcdc"></div>
<div class="a" style="left:0px;top:1081px;width:1920px;height:25px;background:#dadada"></div>
<div class="a" style="left:0px;top:1081px;width:73px;height:25px;background:#f3f3f3"></div>
<div class="a" style="left:75px;top:1081px;width:115px;height:25px;background:#f3f3f3"></div>
<div class="a" style="left:192px;top:1081px;width:224px;height:25px;background:#f3f3f3"></div>
<div class="a" style="left:418px;top:1081px;width:1502px;height:25px;background:#f3f3f3"></div>
<div class="t" style="left:5px;top:1088.61px;font-size:10.5px;">863 Einträge</div>
<div class="t" style="left:80px;top:1088.61px;font-size:10.5px;">sortiert: Belegnummer</div>
<div class="t" style="left:197px;top:1088.61px;font-size:10.5px;">angelegt 23.09.2025 08:42:13, Administrator</div>
<div class="t" style="left:422px;top:1088.61px;font-size:10.5px;">bearbeitet 23.09.2025 08:42:14, Administrator</div>
<div class="a" style="left:1717px;top:1083px;width:87px;height:21px;background:#fff;border:1px solid #d8d8d8"></div>
<div class="t" style="left:1721px;top:1088.61px;font-size:10.5px;">&lt;Alle Felder&gt;</div>
<div class="a" style="left:1803px;top:1084px;width:13px;height:19px;background:#fff;border:1px solid #cfcfcf;border-radius:3px"></div>
<svg style="left:1805px;top:1091px;" width="9" height="6" viewBox="0 0 9 6"><path d="M0.5 0.5 H8.5 L4.5 5Z" fill="#000"/></svg>
<div class="a" style="left:1818px;top:1083px;width:85px;height:21px;background:#fff;border:1px solid #d8d8d8"></div>
<svg style="left:1902px;top:1086px;" width="14" height="14" viewBox="0 0 14 14"><circle cx="7" cy="7" r="6" fill="#2f7fd8"/><circle cx="5.5" cy="5" r="2" fill="#9fd0ff"/></svg>
<div class="a" style="left:0px;top:1106px;width:1920px;height:25px;background:linear-gradient(#fbfbfb,#eeeeee)"></div>
<div class="a" style="left:0px;top:1106px;width:960px;height:25px;background:#f5f5f5;border-top:1px solid #cfcfcf"></div>
<div class="a" style="left:0px;top:1131px;width:1920px;height:2px;background:#a81a48"></div>
<div class="a" style="left:240px;top:1107px;width:1px;height:24px;background:#cfcfcf"></div>
<div class="a" style="left:960px;top:1107px;width:1px;height:24px;background:#cfcfcf"></div>
<div class="a" style="left:480px;top:1106px;width:240px;height:25px;background:#a81a48"></div>
<div class="t" style="left:25px;top:1112.84px;font-size:12px;color:#1f1f1f">Kunden</div>
<div class="t" style="left:266px;top:1112.84px;font-size:12px;color:#1f1f1f">Artikel</div>
<div class="t" style="left:506px;top:1112.84px;font-size:12px;color:#fff">Rechnung</div>
<div class="t" style="left:746px;top:1112.84px;font-size:12px;color:#1f1f1f">Läger</div>
<svg style="left:222px;top:1114px;" width="10" height="10" viewBox="0 0 10 10"><path d="M1 1 L9 9 M9 1 L1 9" fill="none" stroke="#000" stroke-width="1.9" stroke-linejoin="round" stroke-linecap="round" /></svg>
<svg style="left:462px;top:1114px;" width="10" height="10" viewBox="0 0 10 10"><path d="M1 1 L9 9 M9 1 L1 9" fill="none" stroke="#000" stroke-width="1.9" stroke-linejoin="round" stroke-linecap="round" /></svg>
<svg style="left:702px;top:1114px;" width="10" height="10" viewBox="0 0 10 10"><path d="M1 1 L9 9 M9 1 L1 9" fill="none" stroke="#fff" stroke-width="1.9" stroke-linejoin="round" stroke-linecap="round" /></svg>
<svg style="left:941px;top:1114px;" width="10" height="10" viewBox="0 0 10 10"><path d="M1 1 L9 9 M9 1 L1 9" fill="none" stroke="#000" stroke-width="1.9" stroke-linejoin="round" stroke-linecap="round" /></svg>
<svg style="left:3px;top:1112px;" width="16" height="14" viewBox="0 0 16 14"><path d="M6 1 a3 3 0 1 0 0.01 0Z M1 13 Q1 8 6 8 Q8 8 9 8.5" fill="none" stroke="#333" stroke-width="1.2" stroke-linejoin="round" stroke-linecap="round" /><path d="M9 9 H15.5 L14 12.5 H10.5Z" fill="#3d8fc0"/></svg>
<svg style="left:245px;top:1111px;" width="16" height="16" viewBox="0 0 16 16"><path d="M5 1 H10 V6.5 H5Z M1 8 H6.5 V14.5 H1Z" fill="none" stroke="#333" stroke-width="1.2" stroke-linejoin="round" stroke-linecap="round" /><path d="M8 8 H15 V14.5 H8Z" fill="#42a0d8"/></svg>
<svg style="left:486px;top:1111px;" width="16" height="16" viewBox="0 0 16 16"><path d="M1 1 H15 V15 H1Z" fill="#c03a60"/><path d="M4 4 H12 V12 H4Z M6 2 V4 M10 2 V4" fill="none" stroke="#fff" stroke-width="1" stroke-linejoin="round" stroke-linecap="round" /></svg>
<svg style="left:725px;top:1112px;" width="16" height="14" viewBox="0 0 16 14"><path d="M1 13.5 V5 L8 1 L15 5 V13.5 Z M3.5 7 H12.5 V13.5 H3.5Z M3.5 9.5 H12.5 M3.5 11.5 H12.5" fill="none" stroke="#555" stroke-width="1" stroke-linejoin="round" stroke-linecap="round" /></svg></body></html>
